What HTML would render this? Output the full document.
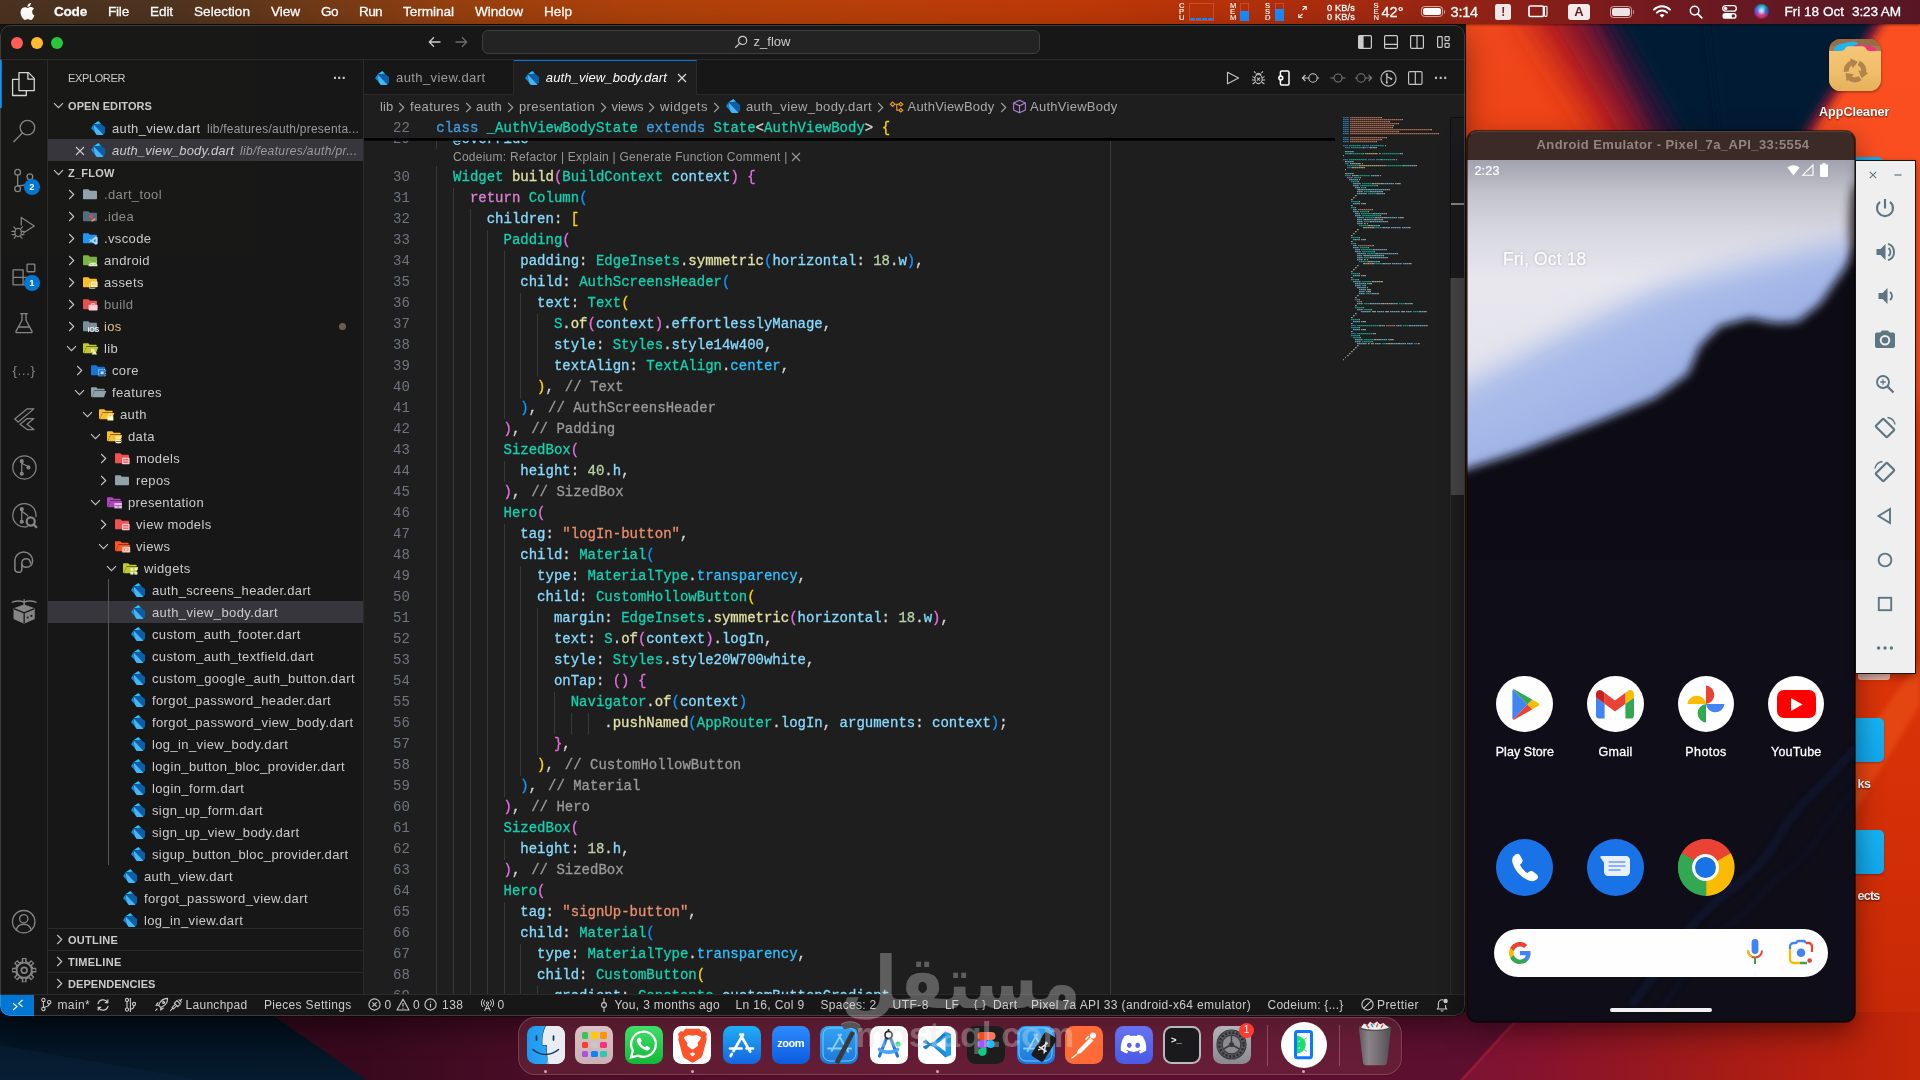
<!DOCTYPE html><html><head><meta charset="utf-8"><title>z_flow</title><style>*{box-sizing:border-box;margin:0;padding:0}
html,body{width:1920px;height:1080px;overflow:hidden;background:#c8300c;font-family:"Liberation Sans",sans-serif;-webkit-font-smoothing:antialiased}
.abs{position:absolute}
svg{display:block;overflow:visible}
.t{position:absolute;white-space:pre;display:block}
#root{position:absolute;left:0;top:0;width:1920px;height:1080px;overflow:hidden;will-change:transform;opacity:.9999}
</style></head><body><div id="root">

<div id="wall" class="abs" style="left:0;top:0;width:1920px;height:1080px;background:linear-gradient(180deg,#f04a1e 0%,#ee4518 12%,#e43c0e 38%,#dc3609 60%,#d02e08 82%,#c42808 100%)">
<svg width="1920" height="1080" viewBox="0 0 1920 1080">
<defs>
<filter id="b20" filterUnits="userSpaceOnUse" x="0" y="0" width="1920" height="1080"><feGaussianBlur stdDeviation="16"/></filter>
<filter id="b8" filterUnits="userSpaceOnUse" x="0" y="0" width="1920" height="1080"><feGaussianBlur stdDeviation="8"/></filter>
<filter id="b3" filterUnits="userSpaceOnUse" x="0" y="0" width="1920" height="1080"><feGaussianBlur stdDeviation="2.5"/></filter><filter id="b5" filterUnits="userSpaceOnUse" x="0" y="0" width="1920" height="1080"><feGaussianBlur stdDeviation="4.5"/></filter>
<linearGradient id="botg" gradientUnits="userSpaceOnUse" x1="0" x2="1920" y1="0" y2="0">
<stop offset="0" stop-color="#2e0818"/><stop offset="0.19" stop-color="#380a1e"/><stop offset="0.28" stop-color="#4a0e28"/><stop offset="0.47" stop-color="#5a1030"/><stop offset="0.68" stop-color="#5e1032"/><stop offset="0.77" stop-color="#5c1030"/><stop offset="1" stop-color="#601030"/>
</linearGradient>
<linearGradient id="botg2" gradientUnits="userSpaceOnUse" x1="1470" x2="1920" y1="0" y2="0">
<stop offset="0" stop-color="#7c1434"/><stop offset="0.16" stop-color="#86142e"/><stop offset="0.36" stop-color="#941822"/><stop offset="0.55" stop-color="#a41c18"/><stop offset="0.75" stop-color="#b42010"/><stop offset="1" stop-color="#c42808"/>
</linearGradient>
<linearGradient id="navg" x1="0" x2="0" y1="0" y2="1">
<stop offset="0" stop-color="#02101c"/><stop offset="1" stop-color="#061c30"/>
</linearGradient>
</defs>
<rect x="0" y="0" width="1466" height="1020" fill="#1a1a1a"/>
<!-- top-right rays -->
<polygon points="1780,-40 1960,-40 1960,420 1700,300" fill="#ff5226" opacity=".75" filter="url(#b20)"/>
<polygon points="1488,-40 1630,-40 1745,235 1665,235" fill="#c0201a" filter="url(#b20)"/>
<polygon points="1530,-40 1660,-40 1745,235 1690,235" fill="#6a1434" filter="url(#b20)"/><polygon points="1566,-40 1680,-40 1745,235 1706,235" fill="#2a1438" filter="url(#b8)"/>
<polygon points="1750,-40 1924,-40 1746,236 1730,160" fill="#7a1a38" filter="url(#b5)"/>
<polygon points="1580,-40 1905,-40 1734,226" fill="#011b36" filter="url(#b8)"/>
<polygon points="1700,-40 1912,-40 1738,232 1722,160" fill="#001a35" filter="url(#b5)"/>
<!-- right strip diagonal lighter band -->
<polygon points="1840,770 1920,660 1920,705 1840,835" fill="#f05a1c" opacity="0.5" filter="url(#b3)"/>
<!-- bottom strip -->
<rect x="0" y="1012" width="1920" height="68" fill="url(#botg)"/>
<polygon points="1522,1012 1920,1012 1920,1080 1460,1080" fill="url(#botg2)"/>
<polygon points="1522,1012 1526,1012 1464,1080 1460,1080" fill="#b02038" opacity=".5"/>
<polygon points="0,1012 268,1012 366,1080 0,1080" fill="url(#navg)"/>
<polygon points="0,1045 200,1080 0,1080" fill="#0a2238" opacity="0.6"/>
</svg>
</div>

<div id="menubar" class="abs" style="-webkit-text-stroke:.3px #fff;left:0;top:0;width:1920px;height:24px;background:linear-gradient(90deg,#4a3322 0%,#4e3420 9%,#6e3a18 16%,#96400f 24%,#ad420c 33%,#b8400a 45%,#bd3a09 56%,#b4320b 64%,#a02a12 72%,#8a2018 79%,#701a20 87%,#5c1926 95%,#561826 100%);box-shadow:0 1px 2px rgba(0,0,0,.45)">
<svg class="abs" style="left:19.5px;top:2.5px" width="15" height="17" viewBox="2 0 20 24"><path fill="#fff" d="M12.152 6.896c-.948 0-2.415-1.078-3.96-1.04-2.04.027-3.91 1.183-4.961 3.014-2.117 3.675-.546 9.103 1.519 12.09 1.013 1.454 2.208 3.09 3.792 3.039 1.52-.065 2.09-.987 3.935-.987 1.831 0 2.35.987 3.96.948 1.637-.026 2.676-1.48 3.676-2.948 1.156-1.688 1.636-3.325 1.662-3.415-.039-.013-3.182-1.221-3.22-4.857-.026-3.04 2.48-4.494 2.597-4.559-1.429-2.09-3.623-2.324-4.39-2.376-2-.156-3.675 1.09-4.61 1.09zM15.53 3.83c.843-1.012 1.4-2.427 1.245-3.83-1.207.052-2.662.805-3.532 1.818-.78.896-1.454 2.338-1.273 3.714 1.338.104 2.715-.688 3.559-1.701"/></svg>
<span class="t" style="left:54.0px;top:2.0px;height:19px;line-height:19px;font-size:13.60px;color:#fff;letter-spacing:-0.250px;font-weight:700;">Code</span>
<span class="t" style="left:108.0px;top:2.0px;height:19px;line-height:19px;font-size:13.60px;color:#fff;letter-spacing:-0.229px;">File</span>
<span class="t" style="left:150.0px;top:2.0px;height:19px;line-height:19px;font-size:13.60px;color:#fff;letter-spacing:-0.109px;">Edit</span>
<span class="t" style="left:194.0px;top:2.0px;height:19px;line-height:19px;font-size:13.60px;color:#fff;letter-spacing:0.006px;">Selection</span>
<span class="t" style="left:271.0px;top:2.0px;height:19px;line-height:19px;font-size:13.60px;color:#fff;letter-spacing:-0.058px;">View</span>
<span class="t" style="left:321.0px;top:2.0px;height:19px;line-height:19px;font-size:13.60px;color:#fff;letter-spacing:-0.571px;">Go</span>
<span class="t" style="left:359.0px;top:2.0px;height:19px;line-height:19px;font-size:13.60px;color:#fff;letter-spacing:-0.650px;">Run</span>
<span class="t" style="left:403.0px;top:2.0px;height:19px;line-height:19px;font-size:13.60px;color:#fff;letter-spacing:-0.049px;">Terminal</span>
<span class="t" style="left:475.0px;top:2.0px;height:19px;line-height:19px;font-size:13.60px;color:#fff;letter-spacing:-0.062px;">Window</span>
<span class="t" style="left:544.0px;top:2.0px;height:19px;line-height:19px;font-size:13.60px;color:#fff;letter-spacing:0.007px;">Help</span>
<span class="t" style="left:1179.0px;top:2.7px;height:6px;line-height:6px;font-size:7.60px;color:#fff;-webkit-text-stroke:.15px #fff;">C</span><span class="t" style="left:1179.0px;top:8.9px;height:6px;line-height:6px;font-size:7.60px;color:#fff;-webkit-text-stroke:.15px #fff;">P</span><span class="t" style="left:1179.0px;top:15.1px;height:6px;line-height:6px;font-size:7.60px;color:#fff;-webkit-text-stroke:.15px #fff;">U</span>
<div class="abs" style="left:1189px;top:3px;width:25px;height:18px;border:1px solid rgba(230,110,100,.45)"></div>
<div class="abs" style="left:1190px;top:18px;width:5px;height:2px;background:#1a8cff"></div>
<div class="abs" style="left:1196px;top:18px;width:5px;height:2px;background:#1a8cff"></div>
<div class="abs" style="left:1202px;top:18px;width:5px;height:2px;background:#1a8cff"></div>
<div class="abs" style="left:1208px;top:18px;width:5px;height:2px;background:#1a8cff"></div>
<span class="t" style="left:1230.0px;top:2.7px;height:6px;line-height:6px;font-size:7.60px;color:#fff;-webkit-text-stroke:.15px #fff;">M</span><span class="t" style="left:1230.0px;top:8.9px;height:6px;line-height:6px;font-size:7.60px;color:#fff;-webkit-text-stroke:.15px #fff;">E</span><span class="t" style="left:1230.0px;top:15.1px;height:6px;line-height:6px;font-size:7.60px;color:#fff;-webkit-text-stroke:.15px #fff;">M</span>
<div class="abs" style="left:1240px;top:3px;width:9px;height:18px;border:1px solid rgba(230,110,100,.45)"></div><div class="abs" style="left:1240px;top:11px;width:9px;height:10px;background:#1a8cff"></div>
<span class="t" style="left:1265.0px;top:2.7px;height:6px;line-height:6px;font-size:7.60px;color:#fff;-webkit-text-stroke:.15px #fff;">S</span><span class="t" style="left:1265.0px;top:8.9px;height:6px;line-height:6px;font-size:7.60px;color:#fff;-webkit-text-stroke:.15px #fff;">S</span><span class="t" style="left:1265.0px;top:15.1px;height:6px;line-height:6px;font-size:7.60px;color:#fff;-webkit-text-stroke:.15px #fff;">D</span>
<div class="abs" style="left:1275px;top:3px;width:9px;height:18px;border:1px solid rgba(230,110,100,.45)"></div><div class="abs" style="left:1275px;top:9px;width:9px;height:12px;background:#1a8cff"></div>
<svg class="abs" style="left:1297px;top:5px" width="11" height="14" viewBox="0 0 11 14"><path d="M5.5 5.2 9 1.7M5.6 1.5H9.2V5.1M5.5 8.8 2 12.3M1.8 8.9v3.6h3.6" stroke="#fff" stroke-width="1.1" fill="none"/></svg>
<span class="t" style="left:1327.0px;top:2.6px;height:10px;line-height:10px;font-size:9.20px;color:#fff;letter-spacing:0.150px;">0 KB/s</span>
<span class="t" style="left:1327.0px;top:11.6px;height:10px;line-height:10px;font-size:9.20px;color:#fff;letter-spacing:0.150px;">0 KB/s</span>
<span class="t" style="left:1373.5px;top:2.7px;height:6px;line-height:6px;font-size:7.60px;color:#fff;-webkit-text-stroke:.15px #fff;">S</span><span class="t" style="left:1373.5px;top:8.9px;height:6px;line-height:6px;font-size:7.60px;color:#fff;-webkit-text-stroke:.15px #fff;">E</span><span class="t" style="left:1373.5px;top:15.1px;height:6px;line-height:6px;font-size:7.60px;color:#fff;-webkit-text-stroke:.15px #fff;">N</span>
<span class="t" style="left:1381.5px;top:2.0px;height:20px;line-height:20px;font-size:14.50px;color:#fff;letter-spacing:0.024px;">42°</span>
<div class="abs" style="left:1420.5px;top:5.8px;width:22.5px;height:11.6px;border:1px solid rgba(255,255,255,.6);border-radius:3.5px"></div><div class="abs" style="left:1422.5px;top:7.8px;width:18.5px;height:7.6px;background:#fff;border-radius:2px"></div><div class="abs" style="left:1443.8px;top:9.6px;width:1.6px;height:4px;background:rgba(255,255,255,.55);border-radius:0 1.5px 1.5px 0"></div>
<span class="t" style="left:1450.5px;top:2.0px;height:20px;line-height:20px;font-size:14.50px;color:#fff;letter-spacing:-0.180px;">3:14</span>
<div class="abs" style="left:1495px;top:4px;width:16px;height:16px;background:#f2e9e9;border-radius:2.5px"></div>
<span class="t" style="left:1501.2px;top:3.5px;height:17px;line-height:17px;font-size:12.00px;color:#7a2020;font-weight:700;-webkit-text-stroke:0;">!</span>
<svg class="abs" style="left:1528px;top:5px" width="20" height="13" viewBox="0 0 20 13"><rect x="1" y="1" width="14.5" height="10.5" rx="1.3" fill="none" stroke="#fff" stroke-width="1.7"/><rect x="16.4" y="1.2" width="2.6" height="10.2" rx=".8" fill="none" stroke="#fff" stroke-width="1.1"/></svg>
<div class="abs" style="left:1568px;top:3.5px;width:22px;height:16.5px;background:#f4eded;border-radius:3px"></div>
<span class="t" style="left:1574.3px;top:3.3px;height:18px;line-height:18px;font-size:13.00px;color:#6a1f24;font-weight:700;-webkit-text-stroke:0;">A</span>
<div class="abs" style="left:1609.5px;top:6.0px;width:22.5px;height:11.6px;border:1px solid rgba(255,255,255,.6);border-radius:3.5px"></div><div class="abs" style="left:1611.5px;top:8.0px;width:18.5px;height:7.6px;background:rgba(255,255,255,.88);border-radius:2px"></div><div class="abs" style="left:1632.8px;top:9.8px;width:1.6px;height:4px;background:rgba(255,255,255,.55);border-radius:0 1.5px 1.5px 0"></div>
<svg class="abs" style="left:1652.5px;top:4.5px" width="18" height="13" viewBox="0 0 18 13"><path d="M1 4.6a11.3 11.3 0 0 1 16 0" stroke="#fff" stroke-width="2" fill="none" stroke-linecap="round"/><path d="M3.9 7.6a7.2 7.2 0 0 1 10.2 0" stroke="#fff" stroke-width="2" fill="none" stroke-linecap="round"/><path d="M6.6 10.3a3.4 3.4 0 0 1 4.8 0L9 12.8z" fill="#fff"/></svg>
<svg class="abs" style="left:1689px;top:4.5px" width="14" height="14" viewBox="0 0 14 14"><circle cx="5.6" cy="5.6" r="4.3" stroke="#fff" stroke-width="1.5" fill="none"/><path d="M8.8 8.8 12.8 12.8" stroke="#fff" stroke-width="1.7" stroke-linecap="round"/></svg>
<svg class="abs" style="left:1721.5px;top:5px" width="15" height="14" viewBox="0 0 15 14"><rect x=".7" y=".7" width="13.6" height="5.4" rx="2.7" fill="none" stroke="#fff" stroke-width="1.3"/><circle cx="3.6" cy="3.4" r="1.7" fill="#fff"/><rect x=".4" y="8" width="14.2" height="5.8" rx="2.9" fill="#fff"/><circle cx="11.3" cy="10.9" r="1.7" fill="#6a1a22"/></svg>
<div class="abs" style="left:1753.5px;top:4px;width:15px;height:15px;border-radius:50%;background:conic-gradient(from 200deg,#e8336a,#9b4ae0,#3aa0f0,#35d3d0,#2a6ae0,#d03a8a,#e8336a);box-shadow:inset 0 0 2px 1px rgba(30,20,60,.6)"></div><div class="abs" style="left:1757.5px;top:7px;width:7px;height:8px;border-radius:50%;background:radial-gradient(circle,#d8f4ff 0%,rgba(120,190,255,.2) 80%)"></div>
<span class="t" style="left:1784.5px;top:2.0px;height:19px;line-height:19px;font-size:13.60px;color:#fff;letter-spacing:-0.020px;">Fri 18 Oct</span>
<span class="t" style="left:1852.0px;top:2.0px;height:19px;line-height:19px;font-size:13.60px;color:#fff;letter-spacing:-0.128px;">3:23 AM</span>
</div>
<div id="vsc" class="abs" style="left:0;top:25px;width:1465px;height:991px;border-radius:10px;overflow:hidden;background:#181818;box-shadow:0 0 0 .5px rgba(0,0,0,.6),0 12px 30px rgba(0,0,0,.45)"><div class="abs" style="left:0;top:-25px;width:1920px;height:1080px">
<div class="abs" style="left:0;top:25px;width:1465px;height:35px;background:#181818;border-bottom:1px solid #2b2b2b"></div>
<div class="abs" style="left:11px;top:37px;width:12px;height:12px;border-radius:6px;background:#ff5f57"></div>
<div class="abs" style="left:31px;top:37px;width:12px;height:12px;border-radius:6px;background:#febc2e"></div>
<div class="abs" style="left:51px;top:37px;width:12px;height:12px;border-radius:6px;background:#28c840"></div>
<svg class="abs" style="left:427.0px;top:35.0px;" width="16" height="14" viewBox="0 0 16 14"><path d="M13.5 7H2.5M7 2.3 2.3 7 7 11.7" stroke="#ccc" stroke-width="1.3" fill="none"/></svg>
<svg class="abs" style="left:453.0px;top:35.0px;" width="16" height="14" viewBox="0 0 16 14"><path d="M2.5 7H13.5M9 2.3 13.7 7 9 11.7" stroke="#6e6e6e" stroke-width="1.3" fill="none"/></svg>
<div class="abs" style="left:482px;top:30px;width:558px;height:24px;border-radius:6px;background:#242424;border:1px solid #3f3f3f"></div>
<svg class="abs" style="left:734.0px;top:35.0px;" width="14" height="14" viewBox="0 0 14 14"><circle cx="8.6" cy="5.4" r="4.1" stroke="#ccc" stroke-width="1.2" fill="none"/><path d="M5.6 8.4 1.2 12.8" stroke="#ccc" stroke-width="1.3"/></svg>
<span class="t" style="left:753.5px;top:32.5px;height:18px;line-height:18px;font-size:13.00px;color:#ccc;letter-spacing:0.025px;">z_flow</span>
<svg class="abs" style="left:1358.0px;top:35.0px;" width="14" height="14" viewBox="0 0 14 14"><rect x=".6" y=".6" width="12.8" height="12.8" rx="1.2" fill="none" stroke="#ccc" stroke-width="1.2"/><rect x=".6" y=".6" width="5" height="12.8" fill="#ccc"/></svg>
<svg class="abs" style="left:1384.0px;top:35.0px;" width="14" height="14" viewBox="0 0 14 14"><rect x=".6" y=".6" width="12.8" height="12.8" rx="1.2" fill="none" stroke="#ccc" stroke-width="1.2"/><path d="M.6 9.3h12.8" stroke="#ccc" stroke-width="1.2"/></svg>
<svg class="abs" style="left:1410.0px;top:35.0px;" width="14" height="14" viewBox="0 0 14 14"><rect x=".6" y=".6" width="12.8" height="12.8" rx="1.2" fill="none" stroke="#ccc" stroke-width="1.2"/><path d="M7 .6v12.8" stroke="#ccc" stroke-width="1.2"/></svg>
<svg class="abs" style="left:1437.0px;top:36.0px;" width="13" height="12" viewBox="0 0 13 12"><rect x=".6" y=".6" width="4.6" height="10.8" rx=".8" fill="none" stroke="#ccc" stroke-width="1.2"/><rect x="8" y=".6" width="4.2" height="4" rx=".8" fill="none" stroke="#ccc" stroke-width="1.2"/><rect x="8" y="7.4" width="4.2" height="4" rx=".8" fill="none" stroke="#ccc" stroke-width="1.2"/></svg>
<div class="abs" style="left:0;top:60px;width:48px;height:935px;background:#181818;border-right:1px solid #2b2b2b"></div>
<div class="abs" style="left:0;top:60px;width:2px;height:48px;background:#0078d4"></div>
<svg class="abs" style="left:6.5px;top:67.5px;" width="31.92" height="31.92" viewBox="0 0 24 24"><g fill="none" stroke="#d7d7d7" stroke-width="0.977444" stroke-linejoin="round" stroke-linecap="round"><path d="M9 3.5h7.2l4.3 4.3V17H9z"/><path d="M15.7 3.7v4.6h4.6"/><path d="M9 8.5H4.2v12.2h10.3V17"/></g></svg>
<svg class="abs" style="left:9.8px;top:116.8px;" width="28.32" height="28.32" viewBox="0 0 24 24"><g fill="none" stroke="#868686" stroke-width="1.10169" stroke-linejoin="round" stroke-linecap="round"><circle cx="14.8" cy="9" r="6.2"/><path d="M10.4 13.6 3.2 21"/></g></svg>
<svg class="abs" style="left:8.6px;top:165.6px;" width="28.8" height="28.8" viewBox="0 0 24 24"><g fill="none" stroke="#868686" stroke-width="1.08333" stroke-linejoin="round" stroke-linecap="round"><circle cx="7.2" cy="5.2" r="2.4"/><circle cx="7.2" cy="19" r="2.4"/><circle cx="17.4" cy="9" r="2.4"/><path d="M7.2 7.6v9M17.4 11.4c0 3.6-4 4.8-10 5.2"/></g></svg>
<div class="abs" style="left:24px;top:179px;width:16px;height:16px;border-radius:8px;background:#0078d4"></div><span class="t" style="left:29.2px;top:181.3px;height:12px;line-height:12px;font-size:9.50px;color:#fff;font-weight:700;">2</span>
<svg class="abs" style="left:11.0px;top:214.0px;" width="25.92" height="25.92" viewBox="0 0 24 24"><g fill="none" stroke="#868686" stroke-width="1.15741" stroke-linejoin="round" stroke-linecap="round"><path d="M9.5 3.2 21.5 11.2 11.4 17.6M9.5 3.2v7"/><ellipse cx="6.6" cy="17.2" rx="3" ry="3.8"/><path d="M3.6 16.2H.8M3.6 19H1M9.6 16.2h2.6M9.6 19h2.4M4.2 13.8 2.6 12M9 13.8l1.6-1.8M4.4 20.8 3 22.4M8.8 20.8l1.4 1.6"/></g></svg>
<svg class="abs" style="left:10.0px;top:261.0px;" width="28.08" height="28.08" viewBox="0 0 24 24"><g fill="none" stroke="#868686" stroke-width="1.11111" stroke-linejoin="round" stroke-linecap="round"><path d="M2.6 7.6h8.6v12.8H2.6zM2.6 14h17.2v6.4H11.2M11.2 14h8.6"/><rect x="14.6" y="2.6" width="6.6" height="6.6" rx=".6"/></g></svg>
<div class="abs" style="left:24px;top:275px;width:16px;height:16px;border-radius:8px;background:#0078d4"></div><span class="t" style="left:29.2px;top:277.3px;height:12px;line-height:12px;font-size:9.50px;color:#fff;font-weight:700;">1</span>
<svg class="abs" style="left:12.0px;top:311.0px;" width="24" height="24" viewBox="0 0 24 24"><g fill="none" stroke="#868686" stroke-width="1.3" stroke-linejoin="round" stroke-linecap="round"><path d="M8.6 2.6h6.8M10 2.8v6.4L4 20.4c-.3.7.1 1.2.8 1.2h14.4c.7 0 1.1-.5.8-1.2L14 9.2V2.8M6.8 16h10.4"/></g></svg>
<span class="t" style="left:12.5px;top:361.0px;height:19px;line-height:19px;font-size:13.50px;color:#868686;letter-spacing:0.546px;">{...}</span>
<svg class="abs" style="left:10.8px;top:405.8px;" width="26.4" height="26.4" viewBox="0 0 24 24"><g fill="none" stroke="#868686" stroke-width="1.13636" stroke-linejoin="round" stroke-linecap="round"><path d="M14.8 2.6h6L6.6 14.6 3.4 11.8zM14.8 11.4h6L14.6 16.6l6.2 4.8h-6L8.2 16.6z"/></g></svg>
<svg class="abs" style="left:10.6px;top:453.6px;" width="26.88" height="26.88" viewBox="0 0 24 24"><g fill="none" stroke="#868686" stroke-width="1.11607" stroke-linejoin="round" stroke-linecap="round"><circle cx="12" cy="12" r="10.4"/><circle cx="9.6" cy="6.4" r="1.3" fill="#868686"/><circle cx="9.6" cy="17.6" r="1.3" fill="#868686"/><circle cx="15.6" cy="12" r="1.3" fill="#868686"/><path d="M9.6 6.4v11.2M9.6 7.6c0 2 6 2.4 6 4.4"/></g></svg>
<svg class="abs" style="left:10.6px;top:501.6px;" width="26.88" height="26.88" viewBox="0 0 24 24"><g fill="none" stroke="#868686" stroke-width="1.11607" stroke-linejoin="round" stroke-linecap="round"><path d="M14.6 21.9A10.4 10.4 0 1 1 22.3 13"/><circle cx="9.6" cy="6.4" r="1.3" fill="#868686"/><circle cx="9.6" cy="17.6" r="1.3" fill="#868686"/><path d="M9.6 6.4v11.2M9.6 7.6c0 2 5 3 5.4 5"/><circle cx="17.6" cy="17.4" r="3.6" stroke-width="2"/><path d="M20.2 20 22.6 22.4" stroke-width="2"/></g></svg>
<svg class="abs" style="left:11.0px;top:550.0px;" width="25.92" height="25.92" viewBox="0 0 24 24"><g fill="none" stroke="#868686" stroke-width="1.38889" stroke-linejoin="round" stroke-linecap="round"><path d="M6.2 20.6c-1.6-.2-2.6-1.4-2.6-3V10a8.2 8.2 0 0 1 16.4 0c0 3.6-2.6 6-5.8 6-2.4 0-4.2-1.6-4.2-4a4 4 0 0 1 8 0M10 12v6.4c0 1.6-1.4 2.6-3.8 2.2"/></g></svg>
<svg class="abs" style="left:9.8px;top:596.8px;" width="28.32" height="28.32" viewBox="0 0 24 24"><g fill="none" stroke="#868686" stroke-width="1.01695" stroke-linejoin="round" stroke-linecap="round"><path d="M2 4.4c4-1.6 7-1.4 10 0 3-1.4 6-1.6 10 0M12 2.4v5" stroke-width="1.2"/><path d="M3 9.6 12 6.4l9 3.2v9L12 22.6 3 18.6z" fill="#868686" stroke="none"/><path d="M3.8 10 12 13.4l8.2-3.4M12 13.4v8.6" stroke="#181818" stroke-width="1.1"/><circle cx="15" cy="17.4" r=".9" fill="#181818" stroke="none"/><circle cx="18.2" cy="16" r=".9" fill="#181818" stroke="none"/></g></svg>
<svg class="abs" style="left:11.3px;top:909.3px;" width="25.44" height="25.44" viewBox="0 0 24 24"><g fill="none" stroke="#868686" stroke-width="1.22642" stroke-linejoin="round" stroke-linecap="round"><circle cx="12" cy="12" r="10.6"/><circle cx="12" cy="9.2" r="3.9"/><path d="M4.9 19.8c1-3.6 3.6-5.4 7.1-5.4s6.100 1.8 7.1 5.4"/></g></svg>
<svg class="abs" style="left:10.8px;top:956.8px;" width="26.4" height="26.4" viewBox="0 0 24 24"><g fill="none" stroke="#868686"><circle cx="12" cy="12" r="7.6" stroke-width="1.5"/><path d="M19.20 12.00 L23.00 12.00" stroke-width="4.4" stroke-linecap="butt"/><path d="M17.09 17.09 L19.78 19.78" stroke-width="4.4" stroke-linecap="butt"/><path d="M12.00 19.20 L12.00 23.00" stroke-width="4.4" stroke-linecap="butt"/><path d="M6.91 17.09 L4.22 19.78" stroke-width="4.4" stroke-linecap="butt"/><path d="M4.80 12.00 L1.00 12.00" stroke-width="4.4" stroke-linecap="butt"/><path d="M6.91 6.91 L4.22 4.22" stroke-width="4.4" stroke-linecap="butt"/><path d="M12.00 4.80 L12.00 1.00" stroke-width="4.4" stroke-linecap="butt"/><path d="M17.09 6.91 L19.78 4.22" stroke-width="4.4" stroke-linecap="butt"/></g><g fill="#181818"><circle cx="12" cy="12" r="6.9"/></g><path d="M19.40 12.00 L22.20 12.00" stroke="#181818" stroke-width="1.6"/><path d="M17.23 17.23 L19.21 19.21" stroke="#181818" stroke-width="1.6"/><path d="M12.00 19.40 L12.00 22.20" stroke="#181818" stroke-width="1.6"/><path d="M6.77 17.23 L4.79 19.21" stroke="#181818" stroke-width="1.6"/><path d="M4.60 12.00 L1.80 12.00" stroke="#181818" stroke-width="1.6"/><path d="M6.77 6.77 L4.79 4.79" stroke="#181818" stroke-width="1.6"/><path d="M12.00 4.60 L12.00 1.80" stroke="#181818" stroke-width="1.6"/><path d="M17.23 6.77 L19.21 4.79" stroke="#181818" stroke-width="1.6"/><circle cx="12" cy="12" r="6.8" fill="none" stroke="#868686" stroke-width="1.5"/><circle cx="12" cy="12" r="2.6" fill="none" stroke="#868686" stroke-width="1.5"/></svg>
<div class="abs" style="left:48px;top:60px;width:316px;height:935px;background:#181818;border-right:1px solid #2b2b2b"></div>
<span class="t" style="left:68.0px;top:70.7px;height:15px;line-height:15px;font-size:11.00px;color:#ccc;letter-spacing:-0.364px;">EXPLORER</span>
<span class="t" style="left:333.0px;top:67.7px;height:20px;line-height:20px;font-size:14.00px;color:#ccc;letter-spacing:-0.329px;font-weight:700;">···</span>
<svg class="abs" style="left:53.0px;top:102.0px;" width="11" height="7" viewBox="0 0 11 7"><path d="M1 1.200 5.500 5.700 10 1.200" stroke="#c5c5c5" stroke-width="1.150" fill="none"/></svg>
<span class="t" style="left:68.0px;top:98.7px;height:15px;line-height:15px;font-size:11.00px;color:#ccc;letter-spacing:0.090px;font-weight:700;">OPEN EDITORS</span>
<svg class="abs" style="left:91.3px;top:120.9px;" width="14.2" height="14.2" viewBox="0 0 14.2 14.2"><path d="M7.400 0 10 2.850 2.600 3.200z" fill="#22ccff"/><path d="M2.600 3.200 10 2.850 14.100 5.900V11.600L12.400 13.400z" fill="#0b5fa8"/><path d="M2.600 3.200 12.400 13.400 11.800 14H5.700L3.400 10.800z" fill="#40b8f8"/><path d="M2.600 3.200 0 7.300 3.400 10.800z" fill="#1c86d6"/></svg>
<span class="t" style="left:112.0px;top:119.7px;height:18px;line-height:18px;font-size:13.00px;color:#ccc;letter-spacing:0.333px;">auth_view.dart</span>
<span class="t" style="left:207.0px;top:120.7px;height:17px;line-height:17px;font-size:12.00px;color:#9d9d9d;letter-spacing:0.227px;">lib/features/auth/presenta...</span>
<div class="abs" style="left:48px;top:139px;width:315px;height:22px;background:#37373d"></div>
<svg class="abs" style="left:75.0px;top:145.5px;" width="10" height="10" viewBox="0 0 10 10"><path d="M1 1 9 9M9 1 1 9" stroke="#ccc" stroke-width="1.100"/></svg>
<svg class="abs" style="left:91.3px;top:142.9px;" width="14.2" height="14.2" viewBox="0 0 14.2 14.2"><path d="M7.400 0 10 2.850 2.600 3.200z" fill="#22ccff"/><path d="M2.600 3.200 10 2.850 14.100 5.900V11.600L12.400 13.400z" fill="#0b5fa8"/><path d="M2.600 3.200 12.400 13.400 11.800 14H5.700L3.400 10.800z" fill="#40b8f8"/><path d="M2.600 3.200 0 7.300 3.400 10.800z" fill="#1c86d6"/></svg>
<span class="t" style="left:112.0px;top:141.7px;height:18px;line-height:18px;font-size:13.00px;color:#ccc;letter-spacing:0.158px;font-style:italic;">auth_view_body.dart</span>
<span class="t" style="left:240.0px;top:142.7px;height:17px;line-height:17px;font-size:12.00px;color:#9d9d9d;letter-spacing:0.372px;font-style:italic;">lib/features/auth/pr...</span>
<svg class="abs" style="left:53.0px;top:169.0px;" width="11" height="7" viewBox="0 0 11 7"><path d="M1 1.200 5.500 5.700 10 1.200" stroke="#c5c5c5" stroke-width="1.150" fill="none"/></svg>
<span class="t" style="left:68.0px;top:165.7px;height:15px;line-height:15px;font-size:11.00px;color:#ccc;letter-spacing:0.214px;font-weight:700;">Z_FLOW</span>
<svg class="abs" style="left:68.0px;top:188.5px;" width="7" height="11" viewBox="0 0 7 11"><path d="M1.200 1 5.700 5.500 1.200 10" stroke="#c5c5c5" stroke-width="1.150" fill="none"/></svg><svg class="abs" style="left:83.0px;top:188.0px;" width="16" height="13" viewBox="0 0 16 13"><g transform="translate(0 .9) scale(1 .9)"><path d="M0 1.700C0 1 .500.500 1.200.500H5.400L6.900 2H12.800c.7 0 1.200.5 1.200 1.200v7.100c0 .7-.5 1.200-1.200 1.200H1.200C.5 11.500 0 11 0 10.300z" fill="#90a4ae"/></g></svg><span class="t" style="left:104.0px;top:183.7px;height:22px;line-height:22px;font-size:13.00px;color:#8c8c8c;letter-spacing:0.370px;">.dart_tool</span>
<svg class="abs" style="left:68.0px;top:210.5px;" width="7" height="11" viewBox="0 0 7 11"><path d="M1.200 1 5.700 5.500 1.200 10" stroke="#c5c5c5" stroke-width="1.150" fill="none"/></svg><svg class="abs" style="left:83.0px;top:210.0px;" width="16" height="13" viewBox="0 0 16 13"><g transform="translate(0 .9) scale(1 .9)"><path d="M0 1.700C0 1 .500.500 1.200.500H5.400L6.900 2H12.800c.7 0 1.200.5 1.200 1.200v7.100c0 .7-.5 1.200-1.200 1.200H1.200C.5 11.500 0 11 0 10.300z" fill="#546e7a"/><path d="M9.500 4.200 7 6.300l5.200 2.600" stroke="#ec407a" stroke-width="1.300" fill="none"/><path d="M12.200 8.900 8.600 11.600" stroke="#ffa726" stroke-width="1.300"/></g></svg><span class="t" style="left:104.0px;top:205.7px;height:22px;line-height:22px;font-size:13.00px;color:#8c8c8c;letter-spacing:0.370px;">.idea</span>
<svg class="abs" style="left:68.0px;top:232.5px;" width="7" height="11" viewBox="0 0 7 11"><path d="M1.200 1 5.700 5.500 1.200 10" stroke="#c5c5c5" stroke-width="1.150" fill="none"/></svg><svg class="abs" style="left:83.0px;top:232.0px;" width="16" height="13" viewBox="0 0 16 13"><g transform="translate(0 .9) scale(1 .9)"><path d="M0 1.700C0 1 .500.500 1.200.500H5.400L6.900 2H12.800c.7 0 1.200.5 1.200 1.200v7.100c0 .7-.5 1.200-1.200 1.200H1.200C.5 11.500 0 11 0 10.300z" fill="#2196f3"/><path d="M14.600 4.800 12.600 4 8.200 8 6.800 6.900 6.200 7.300 7.600 8.600 6.200 9.900 6.800 10.300 8.200 9.200 12.600 13.200 14.600 12.400z" fill="#bbdefb"/><path d="M12.600 6.400 10 8.600 12.600 10.800z" fill="#2196f3"/></g></svg><span class="t" style="left:104.0px;top:227.7px;height:22px;line-height:22px;font-size:13.00px;color:#ccc;letter-spacing:0.370px;">.vscode</span>
<svg class="abs" style="left:68.0px;top:254.5px;" width="7" height="11" viewBox="0 0 7 11"><path d="M1.200 1 5.700 5.500 1.200 10" stroke="#c5c5c5" stroke-width="1.150" fill="none"/></svg><svg class="abs" style="left:83.0px;top:254.0px;" width="16" height="13" viewBox="0 0 16 13"><g transform="translate(0 .9) scale(1 .9)"><path d="M0 1.700C0 1 .500.500 1.200.500H5.400L6.900 2H12.800c.7 0 1.200.5 1.200 1.200v7.100c0 .7-.5 1.200-1.200 1.200H1.200C.5 11.500 0 11 0 10.300z" fill="#7cb342"/><path d="M5.500 12.500a4.500 4 0 0 1 9 0z" fill="#dcedc8"/><path d="M7.200 8.700 6.200 7.200M12.800 8.700l1-1.500" stroke="#dcedc8" stroke-width=".8"/><circle cx="8.300" cy="10.600" r=".6" fill="#7cb342"/><circle cx="11.700" cy="10.600" r=".6" fill="#7cb342"/></g></svg><span class="t" style="left:104.0px;top:249.7px;height:22px;line-height:22px;font-size:13.00px;color:#ccc;letter-spacing:0.370px;">android</span>
<svg class="abs" style="left:68.0px;top:276.5px;" width="7" height="11" viewBox="0 0 7 11"><path d="M1.200 1 5.700 5.500 1.200 10" stroke="#c5c5c5" stroke-width="1.150" fill="none"/></svg><svg class="abs" style="left:83.0px;top:276.0px;" width="16" height="13" viewBox="0 0 16 13"><g transform="translate(0 .9) scale(1 .9)"><path d="M0 1.700C0 1 .500.500 1.200.500H5.400L6.900 2H12.800c.7 0 1.200.5 1.200 1.200v7.100c0 .7-.5 1.200-1.200 1.200H1.200C.5 11.500 0 11 0 10.300z" fill="#fbc02d"/><rect x="8" y="5.300" width="6.600" height="6" fill="#fff9c4"/><path d="M9.200 7h4.200M9.200 8.400h4.200M9.200 9.800h4.200" stroke="#fbc02d" stroke-width=".7"/><path d="M6.600 7.300v5.400h5.600" stroke="#fff9c4" stroke-width=".8" fill="none"/></g></svg><span class="t" style="left:104.0px;top:271.7px;height:22px;line-height:22px;font-size:13.00px;color:#ccc;letter-spacing:0.370px;">assets</span>
<svg class="abs" style="left:68.0px;top:298.5px;" width="7" height="11" viewBox="0 0 7 11"><path d="M1.200 1 5.700 5.500 1.200 10" stroke="#c5c5c5" stroke-width="1.150" fill="none"/></svg><svg class="abs" style="left:83.0px;top:298.0px;" width="16" height="13" viewBox="0 0 16 13"><g transform="translate(0 .9) scale(1 .9)"><path d="M0 1.700C0 1 .500.500 1.200.500H5.400L6.900 2H12.800c.7 0 1.200.5 1.200 1.200v7.100c0 .7-.5 1.200-1.200 1.200H1.200C.5 11.500 0 11 0 10.300z" fill="#e5534f"/><rect x="5.600" y="6.400" width="9" height="6.400" rx="1" fill="#ffcdd2"/><path d="M8.600 6.400V5.200h3v1.200" stroke="#ffcdd2" stroke-width="1" fill="none"/></g></svg><span class="t" style="left:104.0px;top:293.7px;height:22px;line-height:22px;font-size:13.00px;color:#8c8c8c;letter-spacing:0.370px;">build</span>
<svg class="abs" style="left:68.0px;top:320.5px;" width="7" height="11" viewBox="0 0 7 11"><path d="M1.200 1 5.700 5.500 1.200 10" stroke="#c5c5c5" stroke-width="1.150" fill="none"/></svg><svg class="abs" style="left:83.0px;top:320.0px;" width="16" height="13" viewBox="0 0 16 13"><g transform="translate(0 .9) scale(1 .9)"><path d="M0 1.700C0 1 .500.500 1.200.500H5.400L6.900 2H12.800c.7 0 1.200.5 1.200 1.200v7.100c0 .7-.5 1.200-1.200 1.200H1.200C.5 11.500 0 11 0 10.300z" fill="#78909c"/><text x="4.600" y="12.700" font-family="Liberation Sans,sans-serif" font-size="7.200" font-weight="700" fill="#eceff1" letter-spacing="-.3">iOS</text></g></svg><span class="t" style="left:104.0px;top:315.7px;height:22px;line-height:22px;font-size:13.00px;color:#e2c08d;letter-spacing:0.370px;">ios</span>
<svg class="abs" style="left:65.5px;top:344.5px;" width="11" height="7" viewBox="0 0 11 7"><path d="M1 1.200 5.500 5.700 10 1.200" stroke="#c5c5c5" stroke-width="1.150" fill="none"/></svg><svg class="abs" style="left:83.0px;top:342.0px;" width="16" height="13" viewBox="0 0 16 13"><g transform="translate(0 .9) scale(1 .9)"><path d="M0 1.600C0 .9.500.500 1.100.500H5.300L6.800 2H12.600c.6 0 1.100.4 1.100 1.100V4H3.400L.9 11.300C.3 11.300 0 10.800 0 10.300z" fill="#c0ca33"/><path d="M3.300 4.600H15.300L12.900 11.500H.9z" fill="#c0ca33"/><path d="M8.600 13 11.400 8.600 14.200 13z" fill="#f0f4c3"/><rect x="8" y="6.600" width="3.400" height="3.400" fill="#f0f4c3" opacity=".8"/></g></svg><span class="t" style="left:104.0px;top:337.7px;height:22px;line-height:22px;font-size:13.00px;color:#ccc;letter-spacing:0.370px;">lib</span>
<svg class="abs" style="left:76.0px;top:364.5px;" width="7" height="11" viewBox="0 0 7 11"><path d="M1.200 1 5.700 5.500 1.200 10" stroke="#c5c5c5" stroke-width="1.150" fill="none"/></svg><svg class="abs" style="left:91.0px;top:364.0px;" width="16" height="13" viewBox="0 0 16 13"><g transform="translate(0 .9) scale(1 .9)"><path d="M0 1.700C0 1 .500.500 1.200.500H5.400L6.900 2H12.800c.7 0 1.200.5 1.200 1.200v7.100c0 .7-.5 1.200-1.200 1.200H1.200C.5 11.500 0 11 0 10.300z" fill="#1976d2"/><rect x="7.600" y="5.200" width="7" height="7" fill="none" stroke="#bbdefb" stroke-width=".9" stroke-dasharray="1.100 .7"/><rect x="9.600" y="7.200" width="3" height="3" fill="#bbdefb"/></g></svg><span class="t" style="left:112.0px;top:359.7px;height:22px;line-height:22px;font-size:13.00px;color:#ccc;letter-spacing:0.370px;">core</span>
<svg class="abs" style="left:73.5px;top:388.5px;" width="11" height="7" viewBox="0 0 11 7"><path d="M1 1.200 5.500 5.700 10 1.200" stroke="#c5c5c5" stroke-width="1.150" fill="none"/></svg><svg class="abs" style="left:91.0px;top:386.0px;" width="16" height="13" viewBox="0 0 16 13"><g transform="translate(0 .9) scale(1 .9)"><path d="M0 1.600C0 .9.500.500 1.100.500H5.300L6.800 2H12.600c.6 0 1.100.4 1.100 1.100V4H3.400L.9 11.300C.3 11.300 0 10.800 0 10.300z" fill="#90a4ae"/><path d="M3.300 4.600H15.300L12.900 11.500H.9z" fill="#90a4ae"/></g></svg><span class="t" style="left:112.0px;top:381.7px;height:22px;line-height:22px;font-size:13.00px;color:#ccc;letter-spacing:0.370px;">features</span>
<svg class="abs" style="left:81.5px;top:410.5px;" width="11" height="7" viewBox="0 0 11 7"><path d="M1 1.200 5.500 5.700 10 1.200" stroke="#c5c5c5" stroke-width="1.150" fill="none"/></svg><svg class="abs" style="left:99.0px;top:408.0px;" width="16" height="13" viewBox="0 0 16 13"><g transform="translate(0 .9) scale(1 .9)"><path d="M0 1.600C0 .9.500.500 1.100.500H5.300L6.800 2H12.600c.6 0 1.100.4 1.100 1.100V4H3.400L.9 11.300C.3 11.300 0 10.800 0 10.300z" fill="#fbc02d"/><path d="M3.300 4.600H15.300L12.900 11.500H.9z" fill="#fbc02d"/><rect x="8.400" y="8.200" width="6" height="4.800" rx=".6" fill="#fff9c4"/><path d="M9.800 8.200V7a1.600 1.600 0 0 1 3.200 0v1.200" stroke="#fff9c4" stroke-width=".9" fill="none"/></g></svg><span class="t" style="left:120.0px;top:403.7px;height:22px;line-height:22px;font-size:13.00px;color:#ccc;letter-spacing:0.370px;">auth</span>
<svg class="abs" style="left:89.5px;top:432.5px;" width="11" height="7" viewBox="0 0 11 7"><path d="M1 1.200 5.500 5.700 10 1.200" stroke="#c5c5c5" stroke-width="1.150" fill="none"/></svg><svg class="abs" style="left:107.0px;top:430.0px;" width="16" height="13" viewBox="0 0 16 13"><g transform="translate(0 .9) scale(1 .9)"><path d="M0 1.600C0 .9.500.500 1.100.500H5.300L6.800 2H12.600c.6 0 1.100.4 1.100 1.100V4H3.400L.9 11.300C.3 11.300 0 10.800 0 10.300z" fill="#fbc02d"/><path d="M3.300 4.600H15.300L12.900 11.500H.9z" fill="#fbc02d"/><ellipse cx="11.400" cy="7.400" rx="3.200" ry="1.400" fill="#fff9c4"/><path d="M8.200 8.600c0 1.800 6.400 1.800 6.400 0v1.600c0 1.800-6.400 1.800-6.400 0zM8.200 11c0 1.800 6.400 1.800 6.400 0v1.400c0 1.800-6.400 1.800-6.400 0z" fill="#fff9c4"/></g></svg><span class="t" style="left:128.0px;top:425.7px;height:22px;line-height:22px;font-size:13.00px;color:#ccc;letter-spacing:0.370px;">data</span>
<svg class="abs" style="left:100.0px;top:452.5px;" width="7" height="11" viewBox="0 0 7 11"><path d="M1.200 1 5.700 5.500 1.200 10" stroke="#c5c5c5" stroke-width="1.150" fill="none"/></svg><svg class="abs" style="left:115.0px;top:452.0px;" width="16" height="13" viewBox="0 0 16 13"><g transform="translate(0 .9) scale(1 .9)"><path d="M0 1.700C0 1 .500.500 1.200.500H5.400L6.900 2H12.800c.7 0 1.200.5 1.200 1.200v7.100c0 .7-.5 1.200-1.200 1.200H1.200C.5 11.500 0 11 0 10.300z" fill="#ef5350"/><rect x="7" y="5.400" width="7.600" height="7.200" rx=".8" fill="#ffcdd2"/><path d="M8.200 7.400h5.200M8.200 9h5.200M8.200 10.600h5.200" stroke="#ef5350" stroke-width=".9"/></g></svg><span class="t" style="left:136.0px;top:447.7px;height:22px;line-height:22px;font-size:13.00px;color:#ccc;letter-spacing:0.370px;">models</span>
<svg class="abs" style="left:100.0px;top:474.5px;" width="7" height="11" viewBox="0 0 7 11"><path d="M1.200 1 5.700 5.500 1.200 10" stroke="#c5c5c5" stroke-width="1.150" fill="none"/></svg><svg class="abs" style="left:115.0px;top:474.0px;" width="16" height="13" viewBox="0 0 16 13"><g transform="translate(0 .9) scale(1 .9)"><path d="M0 1.700C0 1 .500.500 1.200.500H5.400L6.900 2H12.800c.7 0 1.200.5 1.200 1.200v7.100c0 .7-.5 1.200-1.200 1.200H1.200C.5 11.500 0 11 0 10.300z" fill="#90a4ae"/></g></svg><span class="t" style="left:136.0px;top:469.7px;height:22px;line-height:22px;font-size:13.00px;color:#ccc;letter-spacing:0.370px;">repos</span>
<svg class="abs" style="left:89.5px;top:498.5px;" width="11" height="7" viewBox="0 0 11 7"><path d="M1 1.200 5.500 5.700 10 1.200" stroke="#c5c5c5" stroke-width="1.150" fill="none"/></svg><svg class="abs" style="left:107.0px;top:496.0px;" width="16" height="13" viewBox="0 0 16 13"><g transform="translate(0 .9) scale(1 .9)"><path d="M0 1.600C0 .9.500.500 1.100.500H5.300L6.800 2H12.600c.6 0 1.100.4 1.100 1.100V4H3.400L.9 11.300C.3 11.300 0 10.800 0 10.300z" fill="#ab47bc"/><path d="M3.300 4.600H15.300L12.900 11.500H.9z" fill="#ab47bc"/><rect x="7.400" y="6.800" width="7.600" height="6" fill="#e1bee7"/><path d="M7.400 9.600h7.600M11.200 9.600v3.200" stroke="#ab47bc" stroke-width=".8"/></g></svg><span class="t" style="left:128.0px;top:491.7px;height:22px;line-height:22px;font-size:13.00px;color:#ccc;letter-spacing:0.370px;">presentation</span>
<svg class="abs" style="left:100.0px;top:518.5px;" width="7" height="11" viewBox="0 0 7 11"><path d="M1.200 1 5.700 5.500 1.200 10" stroke="#c5c5c5" stroke-width="1.150" fill="none"/></svg><svg class="abs" style="left:115.0px;top:518.0px;" width="16" height="13" viewBox="0 0 16 13"><g transform="translate(0 .9) scale(1 .9)"><path d="M0 1.700C0 1 .500.500 1.200.500H5.400L6.900 2H12.800c.7 0 1.200.5 1.200 1.200v7.100c0 .7-.5 1.200-1.200 1.200H1.200C.5 11.500 0 11 0 10.300z" fill="#ef5350"/><rect x="7" y="5.400" width="7.600" height="7.200" rx=".8" fill="#ffcdd2"/><path d="M8.200 7.400h5.200M8.200 9h5.200M8.200 10.600h5.200" stroke="#ef5350" stroke-width=".9"/></g></svg><span class="t" style="left:136.0px;top:513.7px;height:22px;line-height:22px;font-size:13.00px;color:#ccc;letter-spacing:0.370px;">view models</span>
<svg class="abs" style="left:97.5px;top:542.5px;" width="11" height="7" viewBox="0 0 11 7"><path d="M1 1.200 5.500 5.700 10 1.200" stroke="#c5c5c5" stroke-width="1.150" fill="none"/></svg><svg class="abs" style="left:115.0px;top:540.0px;" width="16" height="13" viewBox="0 0 16 13"><g transform="translate(0 .9) scale(1 .9)"><path d="M0 1.600C0 .9.500.500 1.100.500H5.300L6.800 2H12.600c.6 0 1.100.4 1.100 1.100V4H3.400L.9 11.300C.3 11.300 0 10.800 0 10.300z" fill="#ff5722"/><path d="M3.300 4.600H15.300L12.900 11.500H.9z" fill="#ff5722"/><rect x="7.200" y="6.400" width="8" height="6.600" rx="1" fill="#ffccbc"/><path d="M10.300 8.300 9 9.700l1.300 1.400M12.100 8.300l1.300 1.400-1.300 1.400" stroke="#ff5722" stroke-width=".8" fill="none"/></g></svg><span class="t" style="left:136.0px;top:535.7px;height:22px;line-height:22px;font-size:13.00px;color:#ccc;letter-spacing:0.370px;">views</span>
<svg class="abs" style="left:105.5px;top:564.5px;" width="11" height="7" viewBox="0 0 11 7"><path d="M1 1.200 5.500 5.700 10 1.200" stroke="#c5c5c5" stroke-width="1.150" fill="none"/></svg><svg class="abs" style="left:123.0px;top:562.0px;" width="16" height="13" viewBox="0 0 16 13"><g transform="translate(0 .9) scale(1 .9)"><path d="M0 1.600C0 .9.500.500 1.100.500H5.300L6.800 2H12.600c.6 0 1.100.4 1.100 1.100V4H3.400L.9 11.300C.3 11.300 0 10.800 0 10.300z" fill="#c0ca33"/><path d="M3.300 4.600H15.300L12.900 11.500H.9z" fill="#c0ca33"/><rect x="7.400" y="6" width="3" height="3" fill="#f0f4c3"/><rect x="11.600" y="5.400" width="3" height="3" fill="#f0f4c3" transform="rotate(45 13.100 6.900)"/><rect x="7.400" y="10" width="3" height="3" fill="#f0f4c3"/><rect x="11.400" y="10" width="3" height="3" fill="#f0f4c3"/></g></svg><span class="t" style="left:144.0px;top:557.7px;height:22px;line-height:22px;font-size:13.00px;color:#ccc;letter-spacing:0.370px;">widgets</span>
<div class="abs" style="left:342px;top:326px;width:0;height:0"></div><div class="abs" style="left:338.500px;top:322.500px;width:7px;height:7px;border-radius:50%;background:#6e5d54"></div>
<svg class="abs" style="left:131.0px;top:582.9px;" width="14.2" height="14.2" viewBox="0 0 14.2 14.2"><path d="M7.400 0 10 2.850 2.600 3.200z" fill="#22ccff"/><path d="M2.600 3.200 10 2.850 14.100 5.900V11.600L12.400 13.400z" fill="#0b5fa8"/><path d="M2.600 3.200 12.400 13.400 11.800 14H5.700L3.400 10.800z" fill="#40b8f8"/><path d="M2.600 3.200 0 7.300 3.400 10.800z" fill="#1c86d6"/></svg>
<span class="t" style="left:152.0px;top:579.7px;height:22px;line-height:22px;font-size:13.00px;color:#ccc;letter-spacing:0.331px;">auth_screens_header.dart</span>
<div class="abs" style="left:48px;top:601px;width:315px;height:22px;background:#37373d"></div>
<svg class="abs" style="left:131.0px;top:604.9px;" width="14.2" height="14.2" viewBox="0 0 14.2 14.2"><path d="M7.400 0 10 2.850 2.600 3.200z" fill="#22ccff"/><path d="M2.600 3.200 10 2.850 14.100 5.900V11.600L12.400 13.400z" fill="#0b5fa8"/><path d="M2.600 3.200 12.400 13.400 11.800 14H5.700L3.400 10.800z" fill="#40b8f8"/><path d="M2.600 3.200 0 7.300 3.400 10.800z" fill="#1c86d6"/></svg>
<span class="t" style="left:152.0px;top:601.7px;height:22px;line-height:22px;font-size:13.00px;color:#ccc;letter-spacing:0.370px;">auth_view_body.dart</span>
<svg class="abs" style="left:131.0px;top:626.9px;" width="14.2" height="14.2" viewBox="0 0 14.2 14.2"><path d="M7.400 0 10 2.850 2.600 3.200z" fill="#22ccff"/><path d="M2.600 3.200 10 2.850 14.100 5.900V11.600L12.400 13.400z" fill="#0b5fa8"/><path d="M2.600 3.200 12.400 13.400 11.800 14H5.700L3.400 10.800z" fill="#40b8f8"/><path d="M2.600 3.200 0 7.300 3.400 10.800z" fill="#1c86d6"/></svg>
<span class="t" style="left:152.0px;top:623.7px;height:22px;line-height:22px;font-size:13.00px;color:#ccc;letter-spacing:0.370px;">custom_auth_footer.dart</span>
<svg class="abs" style="left:131.0px;top:648.9px;" width="14.2" height="14.2" viewBox="0 0 14.2 14.2"><path d="M7.400 0 10 2.850 2.600 3.200z" fill="#22ccff"/><path d="M2.600 3.200 10 2.850 14.100 5.900V11.600L12.400 13.400z" fill="#0b5fa8"/><path d="M2.600 3.200 12.400 13.400 11.800 14H5.700L3.400 10.800z" fill="#40b8f8"/><path d="M2.600 3.200 0 7.300 3.400 10.800z" fill="#1c86d6"/></svg>
<span class="t" style="left:152.0px;top:645.7px;height:22px;line-height:22px;font-size:13.00px;color:#ccc;letter-spacing:0.370px;">custom_auth_textfield.dart</span>
<svg class="abs" style="left:131.0px;top:670.9px;" width="14.2" height="14.2" viewBox="0 0 14.2 14.2"><path d="M7.400 0 10 2.850 2.600 3.200z" fill="#22ccff"/><path d="M2.600 3.200 10 2.850 14.100 5.900V11.600L12.400 13.400z" fill="#0b5fa8"/><path d="M2.600 3.200 12.400 13.400 11.800 14H5.700L3.400 10.800z" fill="#40b8f8"/><path d="M2.600 3.200 0 7.300 3.400 10.800z" fill="#1c86d6"/></svg>
<span class="t" style="left:152.0px;top:667.7px;height:22px;line-height:22px;font-size:13.00px;color:#ccc;letter-spacing:0.430px;">custom_google_auth_button.dart</span>
<svg class="abs" style="left:131.0px;top:692.9px;" width="14.2" height="14.2" viewBox="0 0 14.2 14.2"><path d="M7.400 0 10 2.850 2.600 3.200z" fill="#22ccff"/><path d="M2.600 3.200 10 2.850 14.100 5.900V11.600L12.400 13.400z" fill="#0b5fa8"/><path d="M2.600 3.200 12.400 13.400 11.800 14H5.700L3.400 10.800z" fill="#40b8f8"/><path d="M2.600 3.200 0 7.300 3.400 10.800z" fill="#1c86d6"/></svg>
<span class="t" style="left:152.0px;top:689.7px;height:22px;line-height:22px;font-size:13.00px;color:#ccc;letter-spacing:0.370px;">forgot_password_header.dart</span>
<svg class="abs" style="left:131.0px;top:714.9px;" width="14.2" height="14.2" viewBox="0 0 14.2 14.2"><path d="M7.400 0 10 2.850 2.600 3.200z" fill="#22ccff"/><path d="M2.600 3.200 10 2.850 14.100 5.900V11.600L12.400 13.400z" fill="#0b5fa8"/><path d="M2.600 3.200 12.400 13.400 11.800 14H5.700L3.400 10.800z" fill="#40b8f8"/><path d="M2.600 3.200 0 7.300 3.400 10.800z" fill="#1c86d6"/></svg>
<span class="t" style="left:152.0px;top:711.7px;height:22px;line-height:22px;font-size:13.00px;color:#ccc;letter-spacing:0.389px;">forgot_password_view_body.dart</span>
<svg class="abs" style="left:131.0px;top:736.9px;" width="14.2" height="14.2" viewBox="0 0 14.2 14.2"><path d="M7.400 0 10 2.850 2.600 3.200z" fill="#22ccff"/><path d="M2.600 3.200 10 2.850 14.100 5.900V11.600L12.400 13.400z" fill="#0b5fa8"/><path d="M2.600 3.200 12.400 13.400 11.800 14H5.700L3.400 10.800z" fill="#40b8f8"/><path d="M2.600 3.200 0 7.300 3.400 10.800z" fill="#1c86d6"/></svg>
<span class="t" style="left:152.0px;top:733.7px;height:22px;line-height:22px;font-size:13.00px;color:#ccc;letter-spacing:0.370px;">log_in_view_body.dart</span>
<svg class="abs" style="left:131.0px;top:758.9px;" width="14.2" height="14.2" viewBox="0 0 14.2 14.2"><path d="M7.400 0 10 2.850 2.600 3.200z" fill="#22ccff"/><path d="M2.600 3.200 10 2.850 14.100 5.900V11.600L12.400 13.400z" fill="#0b5fa8"/><path d="M2.600 3.200 12.400 13.400 11.800 14H5.700L3.400 10.800z" fill="#40b8f8"/><path d="M2.600 3.200 0 7.300 3.400 10.800z" fill="#1c86d6"/></svg>
<span class="t" style="left:152.0px;top:755.7px;height:22px;line-height:22px;font-size:13.00px;color:#ccc;letter-spacing:0.370px;">login_button_bloc_provider.dart</span>
<svg class="abs" style="left:131.0px;top:780.9px;" width="14.2" height="14.2" viewBox="0 0 14.2 14.2"><path d="M7.400 0 10 2.850 2.600 3.200z" fill="#22ccff"/><path d="M2.600 3.200 10 2.850 14.100 5.900V11.600L12.400 13.400z" fill="#0b5fa8"/><path d="M2.600 3.200 12.400 13.400 11.800 14H5.700L3.400 10.800z" fill="#40b8f8"/><path d="M2.600 3.200 0 7.300 3.400 10.800z" fill="#1c86d6"/></svg>
<span class="t" style="left:152.0px;top:777.7px;height:22px;line-height:22px;font-size:13.00px;color:#ccc;letter-spacing:0.370px;">login_form.dart</span>
<svg class="abs" style="left:131.0px;top:802.9px;" width="14.2" height="14.2" viewBox="0 0 14.2 14.2"><path d="M7.400 0 10 2.850 2.600 3.200z" fill="#22ccff"/><path d="M2.600 3.200 10 2.850 14.100 5.900V11.600L12.400 13.400z" fill="#0b5fa8"/><path d="M2.600 3.200 12.400 13.400 11.800 14H5.700L3.400 10.800z" fill="#40b8f8"/><path d="M2.600 3.200 0 7.300 3.400 10.800z" fill="#1c86d6"/></svg>
<span class="t" style="left:152.0px;top:799.7px;height:22px;line-height:22px;font-size:13.00px;color:#ccc;letter-spacing:0.370px;">sign_up_form.dart</span>
<svg class="abs" style="left:131.0px;top:824.9px;" width="14.2" height="14.2" viewBox="0 0 14.2 14.2"><path d="M7.400 0 10 2.850 2.600 3.200z" fill="#22ccff"/><path d="M2.600 3.200 10 2.850 14.100 5.900V11.600L12.400 13.400z" fill="#0b5fa8"/><path d="M2.600 3.200 12.400 13.400 11.800 14H5.700L3.400 10.800z" fill="#40b8f8"/><path d="M2.600 3.200 0 7.300 3.400 10.800z" fill="#1c86d6"/></svg>
<span class="t" style="left:152.0px;top:821.7px;height:22px;line-height:22px;font-size:13.00px;color:#ccc;letter-spacing:0.370px;">sign_up_view_body.dart</span>
<svg class="abs" style="left:131.0px;top:846.9px;" width="14.2" height="14.2" viewBox="0 0 14.2 14.2"><path d="M7.400 0 10 2.850 2.600 3.200z" fill="#22ccff"/><path d="M2.600 3.200 10 2.850 14.100 5.900V11.600L12.400 13.400z" fill="#0b5fa8"/><path d="M2.600 3.200 12.400 13.400 11.800 14H5.700L3.400 10.800z" fill="#40b8f8"/><path d="M2.600 3.200 0 7.300 3.400 10.800z" fill="#1c86d6"/></svg>
<span class="t" style="left:152.0px;top:843.7px;height:22px;line-height:22px;font-size:13.00px;color:#ccc;letter-spacing:0.370px;">sigup_button_bloc_provider.dart</span>
<div class="abs" style="left:108px;top:579px;width:1px;height:286px;background:#585858"></div>
<svg class="abs" style="left:123.3px;top:868.9px;" width="14.2" height="14.2" viewBox="0 0 14.2 14.2"><path d="M7.400 0 10 2.850 2.600 3.200z" fill="#22ccff"/><path d="M2.600 3.200 10 2.850 14.100 5.900V11.600L12.400 13.400z" fill="#0b5fa8"/><path d="M2.600 3.200 12.400 13.400 11.800 14H5.700L3.400 10.800z" fill="#40b8f8"/><path d="M2.600 3.200 0 7.300 3.400 10.800z" fill="#1c86d6"/></svg>
<span class="t" style="left:144.0px;top:865.7px;height:22px;line-height:22px;font-size:13.00px;color:#ccc;letter-spacing:0.370px;">auth_view.dart</span>
<svg class="abs" style="left:123.3px;top:890.9px;" width="14.2" height="14.2" viewBox="0 0 14.2 14.2"><path d="M7.400 0 10 2.850 2.600 3.200z" fill="#22ccff"/><path d="M2.600 3.200 10 2.850 14.100 5.900V11.600L12.400 13.400z" fill="#0b5fa8"/><path d="M2.600 3.200 12.400 13.400 11.800 14H5.700L3.400 10.800z" fill="#40b8f8"/><path d="M2.600 3.200 0 7.300 3.400 10.800z" fill="#1c86d6"/></svg>
<span class="t" style="left:144.0px;top:887.7px;height:22px;line-height:22px;font-size:13.00px;color:#ccc;letter-spacing:0.370px;">forgot_password_view.dart</span>
<svg class="abs" style="left:123.3px;top:912.9px;" width="14.2" height="14.2" viewBox="0 0 14.2 14.2"><path d="M7.400 0 10 2.850 2.600 3.200z" fill="#22ccff"/><path d="M2.600 3.200 10 2.850 14.100 5.900V11.600L12.400 13.400z" fill="#0b5fa8"/><path d="M2.600 3.200 12.400 13.400 11.800 14H5.700L3.400 10.800z" fill="#40b8f8"/><path d="M2.600 3.200 0 7.300 3.400 10.800z" fill="#1c86d6"/></svg>
<span class="t" style="left:144.0px;top:909.7px;height:22px;line-height:22px;font-size:13.00px;color:#ccc;letter-spacing:0.370px;">log_in_view.dart</span>
<div class="abs" style="left:48px;top:928px;width:315px;height:22px;background:#181818;border-top:1px solid #2b2b2b"></div>
<svg class="abs" style="left:55.5px;top:934.0px;" width="7" height="11" viewBox="0 0 7 11"><path d="M1.200 1 5.700 5.500 1.200 10" stroke="#c5c5c5" stroke-width="1.150" fill="none"/></svg>
<span class="t" style="left:68.0px;top:932.7px;height:15px;line-height:15px;font-size:11.00px;color:#ccc;letter-spacing:0.246px;font-weight:700;">OUTLINE</span>
<div class="abs" style="left:48px;top:950px;width:315px;height:22px;background:#181818;border-top:1px solid #2b2b2b"></div>
<svg class="abs" style="left:55.5px;top:956.0px;" width="7" height="11" viewBox="0 0 7 11"><path d="M1.200 1 5.700 5.500 1.200 10" stroke="#c5c5c5" stroke-width="1.150" fill="none"/></svg>
<span class="t" style="left:68.0px;top:954.7px;height:15px;line-height:15px;font-size:11.00px;color:#ccc;letter-spacing:0.271px;font-weight:700;">TIMELINE</span>
<div class="abs" style="left:48px;top:972px;width:315px;height:22px;background:#181818;border-top:1px solid #2b2b2b"></div>
<svg class="abs" style="left:55.5px;top:978.0px;" width="7" height="11" viewBox="0 0 7 11"><path d="M1.200 1 5.700 5.500 1.200 10" stroke="#c5c5c5" stroke-width="1.150" fill="none"/></svg>
<span class="t" style="left:68.0px;top:976.7px;height:15px;line-height:15px;font-size:11.00px;color:#ccc;letter-spacing:0.059px;font-weight:700;">DEPENDENCIES</span>
<style>.ln{position:absolute;left:364px;width:45.800px;text-align:right;height:21px;line-height:21px;font:14px/21px "Liberation Mono",monospace;color:#6e7681;white-space:pre}.cl{position:absolute;height:21px;font:14px/21px "Liberation Mono",monospace;white-space:pre;color:#d4d4d4;-webkit-text-stroke:.3px}.ig{position:absolute;width:1px;background:#3a3a3a}</style>
<div class="abs" style="left:364px;top:60px;width:1101px;height:935px;background:#1f1f1f"></div>
<div class="abs" style="left:364px;top:60px;width:1101px;height:35px;background:#181818;border-bottom:1px solid #2b2b2b"></div>
<div class="abs" style="left:364px;top:60px;width:150px;height:35px;background:#181818;border-right:1px solid #2b2b2b;border-bottom:1px solid #2b2b2b"></div>
<svg class="abs" style="left:375.0px;top:70.9px;" width="14.2" height="14.2" viewBox="0 0 14.2 14.2"><path d="M7.400 0 10 2.850 2.600 3.200z" fill="#22ccff"/><path d="M2.600 3.200 10 2.850 14.100 5.900V11.600L12.400 13.400z" fill="#0b5fa8"/><path d="M2.600 3.200 12.400 13.400 11.800 14H5.700L3.400 10.800z" fill="#40b8f8"/><path d="M2.600 3.200 0 7.300 3.400 10.800z" fill="#1c86d6"/></svg>
<span class="t" style="left:396.0px;top:68.7px;height:18px;line-height:18px;font-size:13.00px;color:#9d9d9d;letter-spacing:0.405px;">auth_view.dart</span>
<div class="abs" style="left:514px;top:60px;width:183px;height:35px;background:#1f1f1f;border-right:1px solid #2b2b2b;border-top:1px solid #0078d4"></div>
<svg class="abs" style="left:525.0px;top:70.9px;" width="14.2" height="14.2" viewBox="0 0 14.2 14.2"><path d="M7.400 0 10 2.850 2.600 3.200z" fill="#22ccff"/><path d="M2.600 3.200 10 2.850 14.100 5.900V11.600L12.400 13.400z" fill="#0b5fa8"/><path d="M2.600 3.200 12.400 13.400 11.800 14H5.700L3.400 10.800z" fill="#40b8f8"/><path d="M2.600 3.200 0 7.300 3.400 10.800z" fill="#1c86d6"/></svg>
<span class="t" style="left:545.8px;top:68.7px;height:18px;line-height:18px;font-size:13.00px;color:#fff;letter-spacing:0.115px;font-style:italic;">auth_view_body.dart</span>
<svg class="abs" style="left:677.0px;top:73.0px;" width="10" height="10" viewBox="0 0 10 10"><path d="M1 1 9 9M9 1 1 9" stroke="#ddd" stroke-width="1.150"/></svg>
<svg class="abs" style="left:1226.0px;top:71.0px;" width="14" height="14" viewBox="0 0 14 14"><path d="M1.500 1.200 12.600 7 1.500 12.800z" stroke="#c5c5c5" stroke-width="1.150" fill="none" stroke-linejoin="round"/></svg>
<svg class="abs" style="left:1250.0px;top:70.0px;" width="17" height="16" viewBox="0 0 17 16"><g stroke="#c5c5c5" stroke-width="1.050" fill="none"><ellipse cx="8.500" cy="9" rx="3.600" ry="4.600"/><path d="M6 5.200a2.600 2.600 0 0 1 5 0M4.900 7.800 2.400 6.600M4.900 10H1.800M5.200 12.200 2.600 14M12.100 7.800l2.500-1.200M12.100 10h3.100M11.800 12.200l2.600 1.800M7 7.600l3 3M10 7.600l-3 3M5.600 3.200 4 1.400M11.400 3.200 13 1.400"/></g></svg>
<svg class="abs" style="left:1277.0px;top:70.0px;" width="13" height="16" viewBox="0 0 13 16"><rect x="3.400" y="1" width="8.600" height="14" rx="1.200" stroke="#fff" stroke-width="1.500" fill="none"/><circle cx="3.800" cy="8" r="2.700" fill="#fff"/><circle cx="3.800" cy="8" r="1.100" fill="#181818"/></svg>
<svg class="abs" style="left:1301.0px;top:71.0px;" width="20" height="14" viewBox="0 0 20 14"><g stroke="#c5c5c5" stroke-width="1.100" fill="none"><circle cx="12" cy="7" r="4.200"/><path d="M7.800 7H1.400M4.400 4 1.400 7l3 3M16.200 7h2"/></g></svg>
<svg class="abs" style="left:1329.0px;top:71.0px;" width="18" height="14" viewBox="0 0 18 14"><g stroke="#7a7a7a" stroke-width="1.100" fill="none"><circle cx="9" cy="7" r="4"/><path d="M1.400 7H5M13 7h3.600"/></g></svg>
<svg class="abs" style="left:1354.0px;top:71.0px;" width="20" height="14" viewBox="0 0 20 14"><g stroke="#7a7a7a" stroke-width="1.100" fill="none"><circle cx="7" cy="7" r="4.200"/><path d="M.800 7h2M11.200 7h6.400M14.600 4l3 3-3 3"/></g></svg>
<svg class="abs" style="left:1380.0px;top:70.0px;" width="17" height="17" viewBox="0 0 17 17"><g stroke="#c5c5c5" stroke-width="1.100" fill="none"><circle cx="8.500" cy="8.500" r="7.600"/><path d="M6.800 4.600v8M6.800 6c0 1.600 4.200 1.600 4.200 3"/></g><circle cx="6.800" cy="4.400" r="1.100" fill="#c5c5c5"/><circle cx="6.800" cy="12.600" r="1.100" fill="#c5c5c5"/><circle cx="11.200" cy="8.800" r="1.100" fill="#c5c5c5"/></svg>
<svg class="abs" style="left:1408.0px;top:71.0px;" width="15" height="14" viewBox="0 0 15 14"><rect x=".600" y=".600" width="13.400" height="12.800" rx="1.200" stroke="#c5c5c5" stroke-width="1.150" fill="none"/><path d="M7.300.600v12.800" stroke="#c5c5c5" stroke-width="1.150"/></svg>
<span class="t" style="left:1434.0px;top:67.5px;height:20px;line-height:20px;font-size:14.00px;color:#c5c5c5;letter-spacing:0.004px;font-weight:700;">···</span>
<span class="t" style="left:380.0px;top:98.2px;height:18px;line-height:18px;font-size:13.00px;color:#a9a9a9;letter-spacing:0.164px;">lib</span>
<svg class="abs" style="left:398.3px;top:101.5px;" width="7" height="11" viewBox="0 0 7 11"><path d="M1.200 1 5.700 5.500 1.200 10" stroke="#a0a0a0" stroke-width="1.150" fill="none"/></svg>
<span class="t" style="left:410.0px;top:98.2px;height:18px;line-height:18px;font-size:13.00px;color:#a9a9a9;letter-spacing:0.378px;">features</span>
<svg class="abs" style="left:464.8px;top:101.5px;" width="7" height="11" viewBox="0 0 7 11"><path d="M1.200 1 5.700 5.500 1.200 10" stroke="#a0a0a0" stroke-width="1.150" fill="none"/></svg>
<span class="t" style="left:476.0px;top:98.2px;height:18px;line-height:18px;font-size:13.00px;color:#a9a9a9;letter-spacing:0.175px;">auth</span>
<svg class="abs" style="left:506.8px;top:101.5px;" width="7" height="11" viewBox="0 0 7 11"><path d="M1.200 1 5.700 5.500 1.200 10" stroke="#a0a0a0" stroke-width="1.150" fill="none"/></svg>
<span class="t" style="left:519.0px;top:98.2px;height:18px;line-height:18px;font-size:13.00px;color:#a9a9a9;letter-spacing:0.371px;">presentation</span>
<svg class="abs" style="left:599.8px;top:101.5px;" width="7" height="11" viewBox="0 0 7 11"><path d="M1.200 1 5.700 5.500 1.200 10" stroke="#a0a0a0" stroke-width="1.150" fill="none"/></svg>
<span class="t" style="left:611.5px;top:98.2px;height:18px;line-height:18px;font-size:13.00px;color:#a9a9a9;letter-spacing:-0.101px;">views</span>
<svg class="abs" style="left:648.3px;top:101.5px;" width="7" height="11" viewBox="0 0 7 11"><path d="M1.200 1 5.700 5.500 1.200 10" stroke="#a0a0a0" stroke-width="1.150" fill="none"/></svg>
<span class="t" style="left:660.0px;top:98.2px;height:18px;line-height:18px;font-size:13.00px;color:#a9a9a9;letter-spacing:0.560px;">widgets</span>
<svg class="abs" style="left:712.8px;top:101.5px;" width="7" height="11" viewBox="0 0 7 11"><path d="M1.200 1 5.700 5.500 1.200 10" stroke="#a0a0a0" stroke-width="1.150" fill="none"/></svg>
<svg class="abs" style="left:726.0px;top:99.4px;" width="14.2" height="14.2" viewBox="0 0 14.2 14.2"><path d="M7.400 0 10 2.850 2.600 3.200z" fill="#22ccff"/><path d="M2.600 3.200 10 2.850 14.100 5.900V11.600L12.400 13.400z" fill="#0b5fa8"/><path d="M2.600 3.200 12.400 13.400 11.800 14H5.700L3.400 10.800z" fill="#40b8f8"/><path d="M2.600 3.200 0 7.300 3.400 10.800z" fill="#1c86d6"/></svg>
<span class="t" style="left:746.0px;top:98.2px;height:18px;line-height:18px;font-size:13.00px;color:#a9a9a9;letter-spacing:0.368px;">auth_view_body.dart</span>
<svg class="abs" style="left:877.0px;top:101.5px;" width="7" height="11" viewBox="0 0 7 11"><path d="M1.200 1 5.700 5.500 1.200 10" stroke="#a0a0a0" stroke-width="1.150" fill="none"/></svg>
<svg class="abs" style="left:889.0px;top:99.5px;" width="15" height="14" viewBox="0 0 15 14"><g stroke="#ee9d28" stroke-width="1.150" fill="none"><path d="M3.600 2 1.400 4.200 3.600 6.400 5.800 4.200zM5.800 4.200h4M7.800 4.200v6h2"/><path d="M11.800 2.400 9.800 4.200l2 1.800 2-1.800zM11.800 8.400 9.800 10.200l2 1.800 2-1.800z"/></g></svg>
<span class="t" style="left:907.5px;top:98.2px;height:18px;line-height:18px;font-size:13.00px;color:#a9a9a9;letter-spacing:0.224px;">AuthViewBody</span>
<svg class="abs" style="left:999.5px;top:101.5px;" width="7" height="11" viewBox="0 0 7 11"><path d="M1.200 1 5.700 5.500 1.200 10" stroke="#a0a0a0" stroke-width="1.150" fill="none"/></svg>
<svg class="abs" style="left:1012.0px;top:99.0px;" width="15" height="15" viewBox="0 0 15 15"><g stroke="#b180d7" stroke-width="1.100" fill="none" stroke-linejoin="round"><path d="M7.500 1.200 13.400 4v7L7.500 13.800 1.600 11V4zM1.600 4l5.900 2.800L13.400 4M7.500 6.800v7"/></g></svg>
<span class="t" style="left:1030.0px;top:98.2px;height:18px;line-height:18px;font-size:13.00px;color:#a9a9a9;letter-spacing:0.265px;">AuthViewBody</span>
<div class="abs" style="left:364px;top:117px;width:1101px;height:877px;overflow:hidden"><div class="abs" style="left:-364px;top:-117px;width:1920px;height:1080px">
<div class="ln" style="top:128.5px">29</div><div class="cl" style="top:128.5px;left:453.1px"><span style="color:#86dbff">@override</span></div>
<div class="ig" style="left:436.3px;top:138px;height:10.500px"></div>
<span class="t" style="left:453.0px;top:148.9px;height:17px;line-height:17px;font-size:12.00px;color:#999;letter-spacing:0.252px;">Codeium: Refactor | Explain | Generate Function Comment |</span>
<svg class="abs" style="left:790.5px;top:151.8px;" width="10" height="10" viewBox="0 0 10 10"><path d="M1 1 9 9M9 1 1 9" stroke="#999" stroke-width="1.100"/></svg>
<div class="ln" style="top:167.0px">30</div><div class="cl" style="top:167.0px;left:453.1px"><span style="color:#12d1b1">Widget</span><span style="color:#d6d6d6"> </span><span style="color:#e0e0a6">build</span><span style="color:#e66ee2">(</span><span style="color:#12d1b1">BuildContext</span><span style="color:#d6d6d6"> </span><span style="color:#86dbff">context</span><span style="color:#e66ee2">)</span><span style="color:#d6d6d6"> </span><span style="color:#e66ee2">{</span></div>
<div class="ln" style="top:188.0px">31</div><div class="cl" style="top:188.0px;left:469.9px"><span style="color:#dc82d6">return</span><span style="color:#d6d6d6"> </span><span style="color:#12d1b1">Column</span><span style="color:#0f98ff">(</span></div>
<div class="ln" style="top:209.0px">32</div><div class="cl" style="top:209.0px;left:486.7px"><span style="color:#86dbff">children</span><span style="color:#d6d6d6">:</span><span style="color:#d6d6d6"> </span><span style="color:#ffd500">[</span></div>
<div class="ln" style="top:230.0px">33</div><div class="cl" style="top:230.0px;left:503.5px"><span style="color:#12d1b1">Padding</span><span style="color:#e66ee2">(</span></div>
<div class="ln" style="top:251.0px">34</div><div class="cl" style="top:251.0px;left:520.3px"><span style="color:#86dbff">padding</span><span style="color:#d6d6d6">:</span><span style="color:#d6d6d6"> </span><span style="color:#12d1b1">EdgeInsets</span><span style="color:#d6d6d6">.</span><span style="color:#e0e0a6">symmetric</span><span style="color:#0f98ff">(</span><span style="color:#86dbff">horizontal</span><span style="color:#d6d6d6">:</span><span style="color:#d6d6d6"> </span><span style="color:#b8d3a6">18</span><span style="color:#d6d6d6">.</span><span style="color:#86dbff">w</span><span style="color:#0f98ff">)</span><span style="color:#d6d6d6">,</span></div>
<div class="ln" style="top:272.0px">35</div><div class="cl" style="top:272.0px;left:520.3px"><span style="color:#86dbff">child</span><span style="color:#d6d6d6">:</span><span style="color:#d6d6d6"> </span><span style="color:#12d1b1">AuthScreensHeader</span><span style="color:#0f98ff">(</span></div>
<div class="ln" style="top:293.0px">36</div><div class="cl" style="top:293.0px;left:537.1px"><span style="color:#86dbff">text</span><span style="color:#d6d6d6">:</span><span style="color:#d6d6d6"> </span><span style="color:#12d1b1">Text</span><span style="color:#ffd500">(</span></div>
<div class="ln" style="top:314.0px">37</div><div class="cl" style="top:314.0px;left:553.9px"><span style="color:#12d1b1">S</span><span style="color:#d6d6d6">.</span><span style="color:#e0e0a6">of</span><span style="color:#e66ee2">(</span><span style="color:#86dbff">context</span><span style="color:#e66ee2">)</span><span style="color:#d6d6d6">.</span><span style="color:#86dbff">effortlesslyManage</span><span style="color:#d6d6d6">,</span></div>
<div class="ln" style="top:335.0px">38</div><div class="cl" style="top:335.0px;left:553.9px"><span style="color:#86dbff">style</span><span style="color:#d6d6d6">:</span><span style="color:#d6d6d6"> </span><span style="color:#12d1b1">Styles</span><span style="color:#d6d6d6">.</span><span style="color:#86dbff">style14w400</span><span style="color:#d6d6d6">,</span></div>
<div class="ln" style="top:356.0px">39</div><div class="cl" style="top:356.0px;left:553.9px"><span style="color:#86dbff">textAlign</span><span style="color:#d6d6d6">:</span><span style="color:#d6d6d6"> </span><span style="color:#12d1b1">TextAlign</span><span style="color:#d6d6d6">.</span><span style="color:#30bfff">center</span><span style="color:#d6d6d6">,</span></div>
<div class="ln" style="top:377.0px">40</div><div class="cl" style="top:377.0px;left:537.1px"><span style="color:#ffd500">)</span><span style="color:#d6d6d6">,</span><span style="color:#9a9a9a;margin-left:2.5px"> // Text</span></div>
<div class="ln" style="top:398.0px">41</div><div class="cl" style="top:398.0px;left:520.3px"><span style="color:#0f98ff">)</span><span style="color:#d6d6d6">,</span><span style="color:#9a9a9a;margin-left:2.5px"> // AuthScreensHeader</span></div>
<div class="ln" style="top:419.0px">42</div><div class="cl" style="top:419.0px;left:503.5px"><span style="color:#e66ee2">)</span><span style="color:#d6d6d6">,</span><span style="color:#9a9a9a;margin-left:2.5px"> // Padding</span></div>
<div class="ln" style="top:440.0px">43</div><div class="cl" style="top:440.0px;left:503.5px"><span style="color:#12d1b1">SizedBox</span><span style="color:#e66ee2">(</span></div>
<div class="ln" style="top:461.0px">44</div><div class="cl" style="top:461.0px;left:520.3px"><span style="color:#86dbff">height</span><span style="color:#d6d6d6">:</span><span style="color:#d6d6d6"> </span><span style="color:#b8d3a6">40</span><span style="color:#d6d6d6">.</span><span style="color:#86dbff">h</span><span style="color:#d6d6d6">,</span></div>
<div class="ln" style="top:482.0px">45</div><div class="cl" style="top:482.0px;left:503.5px"><span style="color:#e66ee2">)</span><span style="color:#d6d6d6">,</span><span style="color:#9a9a9a;margin-left:2.5px"> // SizedBox</span></div>
<div class="ln" style="top:503.0px">46</div><div class="cl" style="top:503.0px;left:503.5px"><span style="color:#12d1b1">Hero</span><span style="color:#e66ee2">(</span></div>
<div class="ln" style="top:524.0px">47</div><div class="cl" style="top:524.0px;left:520.3px"><span style="color:#86dbff">tag</span><span style="color:#d6d6d6">:</span><span style="color:#d6d6d6"> </span><span style="color:#e8906e">&quot;logIn-button&quot;</span><span style="color:#d6d6d6">,</span></div>
<div class="ln" style="top:545.0px">48</div><div class="cl" style="top:545.0px;left:520.3px"><span style="color:#86dbff">child</span><span style="color:#d6d6d6">:</span><span style="color:#d6d6d6"> </span><span style="color:#12d1b1">Material</span><span style="color:#0f98ff">(</span></div>
<div class="ln" style="top:566.0px">49</div><div class="cl" style="top:566.0px;left:537.1px"><span style="color:#86dbff">type</span><span style="color:#d6d6d6">:</span><span style="color:#d6d6d6"> </span><span style="color:#12d1b1">MaterialType</span><span style="color:#d6d6d6">.</span><span style="color:#30bfff">transparency</span><span style="color:#d6d6d6">,</span></div>
<div class="ln" style="top:587.0px">50</div><div class="cl" style="top:587.0px;left:537.1px"><span style="color:#86dbff">child</span><span style="color:#d6d6d6">:</span><span style="color:#d6d6d6"> </span><span style="color:#12d1b1">CustomHollowButton</span><span style="color:#ffd500">(</span></div>
<div class="ln" style="top:608.0px">51</div><div class="cl" style="top:608.0px;left:553.9px"><span style="color:#86dbff">margin</span><span style="color:#d6d6d6">:</span><span style="color:#d6d6d6"> </span><span style="color:#12d1b1">EdgeInsets</span><span style="color:#d6d6d6">.</span><span style="color:#e0e0a6">symmetric</span><span style="color:#e66ee2">(</span><span style="color:#86dbff">horizontal</span><span style="color:#d6d6d6">:</span><span style="color:#d6d6d6"> </span><span style="color:#b8d3a6">18</span><span style="color:#d6d6d6">.</span><span style="color:#86dbff">w</span><span style="color:#e66ee2">)</span><span style="color:#d6d6d6">,</span></div>
<div class="ln" style="top:629.0px">52</div><div class="cl" style="top:629.0px;left:553.9px"><span style="color:#86dbff">text</span><span style="color:#d6d6d6">:</span><span style="color:#d6d6d6"> </span><span style="color:#12d1b1">S</span><span style="color:#d6d6d6">.</span><span style="color:#e0e0a6">of</span><span style="color:#e66ee2">(</span><span style="color:#86dbff">context</span><span style="color:#e66ee2">)</span><span style="color:#d6d6d6">.</span><span style="color:#86dbff">logIn</span><span style="color:#d6d6d6">,</span></div>
<div class="ln" style="top:650.0px">53</div><div class="cl" style="top:650.0px;left:553.9px"><span style="color:#86dbff">style</span><span style="color:#d6d6d6">:</span><span style="color:#d6d6d6"> </span><span style="color:#12d1b1">Styles</span><span style="color:#d6d6d6">.</span><span style="color:#86dbff">style20W700white</span><span style="color:#d6d6d6">,</span></div>
<div class="ln" style="top:671.0px">54</div><div class="cl" style="top:671.0px;left:553.9px"><span style="color:#86dbff">onTap</span><span style="color:#d6d6d6">:</span><span style="color:#d6d6d6"> </span><span style="color:#e66ee2">()</span><span style="color:#d6d6d6"> </span><span style="color:#e66ee2">{</span></div>
<div class="ln" style="top:692.0px">55</div><div class="cl" style="top:692.0px;left:570.7px"><span style="color:#12d1b1">Navigator</span><span style="color:#d6d6d6">.</span><span style="color:#e0e0a6">of</span><span style="color:#0f98ff">(</span><span style="color:#86dbff">context</span><span style="color:#0f98ff">)</span></div>
<div class="ln" style="top:713.0px">56</div><div class="cl" style="top:713.0px;left:604.3px"><span style="color:#d6d6d6">.</span><span style="color:#e0e0a6">pushNamed</span><span style="color:#0f98ff">(</span><span style="color:#12d1b1">AppRouter</span><span style="color:#d6d6d6">.</span><span style="color:#86dbff">logIn</span><span style="color:#d6d6d6">, </span><span style="color:#86dbff">arguments</span><span style="color:#d6d6d6">:</span><span style="color:#d6d6d6"> </span><span style="color:#86dbff">context</span><span style="color:#0f98ff">)</span><span style="color:#d6d6d6">;</span></div>
<div class="ln" style="top:734.0px">57</div><div class="cl" style="top:734.0px;left:553.9px"><span style="color:#e66ee2">}</span><span style="color:#d6d6d6">,</span></div>
<div class="ln" style="top:755.0px">58</div><div class="cl" style="top:755.0px;left:537.1px"><span style="color:#ffd500">)</span><span style="color:#d6d6d6">,</span><span style="color:#9a9a9a;margin-left:2.5px"> // CustomHollowButton</span></div>
<div class="ln" style="top:776.0px">59</div><div class="cl" style="top:776.0px;left:520.3px"><span style="color:#0f98ff">)</span><span style="color:#d6d6d6">,</span><span style="color:#9a9a9a;margin-left:2.5px"> // Material</span></div>
<div class="ln" style="top:797.0px">60</div><div class="cl" style="top:797.0px;left:503.5px"><span style="color:#e66ee2">)</span><span style="color:#d6d6d6">,</span><span style="color:#9a9a9a;margin-left:2.5px"> // Hero</span></div>
<div class="ln" style="top:818.0px">61</div><div class="cl" style="top:818.0px;left:503.5px"><span style="color:#12d1b1">SizedBox</span><span style="color:#e66ee2">(</span></div>
<div class="ln" style="top:839.0px">62</div><div class="cl" style="top:839.0px;left:520.3px"><span style="color:#86dbff">height</span><span style="color:#d6d6d6">:</span><span style="color:#d6d6d6"> </span><span style="color:#b8d3a6">18</span><span style="color:#d6d6d6">.</span><span style="color:#86dbff">h</span><span style="color:#d6d6d6">,</span></div>
<div class="ln" style="top:860.0px">63</div><div class="cl" style="top:860.0px;left:503.5px"><span style="color:#e66ee2">)</span><span style="color:#d6d6d6">,</span><span style="color:#9a9a9a;margin-left:2.5px"> // SizedBox</span></div>
<div class="ln" style="top:881.0px">64</div><div class="cl" style="top:881.0px;left:503.5px"><span style="color:#12d1b1">Hero</span><span style="color:#e66ee2">(</span></div>
<div class="ln" style="top:902.0px">65</div><div class="cl" style="top:902.0px;left:520.3px"><span style="color:#86dbff">tag</span><span style="color:#d6d6d6">:</span><span style="color:#d6d6d6"> </span><span style="color:#e8906e">&quot;signUp-button&quot;</span><span style="color:#d6d6d6">,</span></div>
<div class="ln" style="top:923.0px">66</div><div class="cl" style="top:923.0px;left:520.3px"><span style="color:#86dbff">child</span><span style="color:#d6d6d6">:</span><span style="color:#d6d6d6"> </span><span style="color:#12d1b1">Material</span><span style="color:#0f98ff">(</span></div>
<div class="ln" style="top:944.0px">67</div><div class="cl" style="top:944.0px;left:537.1px"><span style="color:#86dbff">type</span><span style="color:#d6d6d6">:</span><span style="color:#d6d6d6"> </span><span style="color:#12d1b1">MaterialType</span><span style="color:#d6d6d6">.</span><span style="color:#30bfff">transparency</span><span style="color:#d6d6d6">,</span></div>
<div class="ln" style="top:965.0px">68</div><div class="cl" style="top:965.0px;left:537.1px"><span style="color:#86dbff">child</span><span style="color:#d6d6d6">:</span><span style="color:#d6d6d6"> </span><span style="color:#12d1b1">CustomButton</span><span style="color:#ffd500">(</span></div>
<div class="ln" style="top:986.0px">69</div><div class="cl" style="top:986.0px;left:553.9px"><span style="color:#86dbff">gradient</span><span style="color:#d6d6d6">:</span><span style="color:#d6d6d6"> </span><span style="color:#12d1b1">Constants</span><span style="color:#d6d6d6">.</span><span style="color:#86dbff">customButtonGradient</span><span style="color:#d6d6d6">,</span></div>
<div class="ig" style="left:436.3px;top:166.0px;height:841.0px"></div>
<div class="ig" style="left:453.1px;top:188.0px;height:819.0px"></div>
<div class="ig" style="left:469.9px;top:209.0px;height:798.0px"></div>
<div class="ig" style="left:486.7px;top:230.0px;height:777.0px"></div>
<div class="ig" style="left:503.5px;top:251.0px;height:168.0px"></div>
<div class="ig" style="left:503.5px;top:461.0px;height:21.0px"></div>
<div class="ig" style="left:503.5px;top:524.0px;height:273.0px"></div>
<div class="ig" style="left:503.5px;top:839.0px;height:21.0px"></div>
<div class="ig" style="left:503.5px;top:902.0px;height:105.0px"></div>
<div class="ig" style="left:520.3px;top:293.0px;height:105.0px"></div>
<div class="ig" style="left:520.3px;top:566.0px;height:210.0px"></div>
<div class="ig" style="left:520.3px;top:944.0px;height:63.0px"></div>
<div class="ig" style="left:537.1px;top:314.0px;height:63.0px"></div>
<div class="ig" style="left:537.1px;top:608.0px;height:147.0px"></div>
<div class="ig" style="left:537.1px;top:986.0px;height:21.0px"></div>
<div class="ig" style="left:553.9px;top:692.0px;height:42.0px"></div>
<div class="ig" style="left:570.7px;top:713.0px;height:21.0px"></div>
<div class="ig" style="left:587.5px;top:713.0px;height:21.0px"></div>
</div></div>
<div class="abs" style="left:364px;top:117px;width:972px;height:21px;background:#1f1f1f"></div><div class="abs" style="left:364px;top:138px;width:971px;height:2.600px;background:linear-gradient(180deg,#000 0,#000 70%,rgba(0,0,0,.4) 100%)"></div>
<div class="ln" style="top:118.0px">22</div><div class="cl" style="top:118.0px;left:436.3px"><span style="color:#3e9fe0">class</span><span style="color:#d6d6d6"> </span><span style="color:#12d1b1">_AuthViewBodyState</span><span style="color:#d6d6d6"> </span><span style="color:#3e9fe0">extends</span><span style="color:#d6d6d6"> </span><span style="color:#12d1b1">State</span><span style="color:#d6d6d6">&lt;</span><span style="color:#12d1b1">AuthViewBody</span><span style="color:#d6d6d6">&gt;</span><span style="color:#d6d6d6"> </span><span style="color:#ffd500">{</span></div>
<div class="abs" style="left:1110px;top:140.500px;width:1px;height:853.500px;background:#3c3c3c"></div>
<svg class="abs" style="left:0;top:0" width="1920" height="1080" viewBox="0 0 1920 1080" opacity=".66"><path d="M1343 117.65h6M1343 119.65h6M1343 121.65h6M1343 123.65h6M1343 125.65h6M1343 127.65h6M1343 129.65h6M1343 131.65h6M1343 133.65h6M1343 137.65h6M1343 139.65h6M1343 141.65h6M1343 145.65h5M1362 145.65h7M1345 147.65h5M1365 147.65h5M1343 159.65h5M1368 159.65h7M1345 163.65h4M1347 167.65h5M1351 325.65h5M1351 333.65h5M1414 343.65h4" stroke="#3e9fe0" stroke-width="1.300" stroke-dasharray="1.700 .300" fill="none"/><path d="M1350 117.65h31M1350 119.65h52M1350 121.65h39M1350 123.65h48M1350 125.65h43M1350 127.65h42M1350 129.65h81M1350 131.65h48M1350 133.65h88M1350 137.65h36M1350 139.65h31M1350 141.65h26M1358 209.65h14M1358 245.65h15M1357 301.65h4M1386 325.65h8" stroke="#e8906e" stroke-width="1.300" stroke-dasharray="1.700 .300" fill="none"/><path d="M1381 117.65h1M1402 119.65h1M1389 121.65h1M1398 123.65h1M1393 125.65h1M1392 127.65h1M1431 129.65h1M1398 131.65h1M1438 133.65h1M1386 137.65h1M1381 139.65h1M1376 141.65h1M1385 145.65h1M1363 147.65h2M1370 147.65h1M1374 147.65h3M1345 151.65h1M1350 153.65h1M1363 153.65h1M1376 153.65h2M1379 153.65h2M1400 153.65h3M1343 155.65h1M1381 159.65h1M1394 159.65h1M1396 159.65h1M1345 161.65h1M1359 163.65h2M1362 163.65h1M1359 165.65h1M1384 165.65h2M1403 165.65h1M1414 165.65h3M1352 167.65h1M1362 167.65h3M1345 169.65h1M1345 173.65h1M1357 175.65h1M1378 175.65h1M1380 175.65h1M1360 177.65h1M1359 179.65h1M1358 181.65h1M1372 183.65h1M1382 183.65h1M1397 183.65h1M1399 183.65h2M1377 185.65h1M1365 187.65h1M1358 189.65h1M1361 189.65h1M1369 189.65h2M1389 189.65h1M1370 191.65h1M1382 191.65h1M1377 193.65h1M1384 193.65h1M1355 195.65h2M1353 197.65h2M1351 199.65h2M1359 201.65h1M1363 203.65h1M1365 203.65h1M1351 205.65h2M1355 207.65h1M1372 209.65h1M1368 211.65h1M1373 213.65h1M1386 213.65h1M1380 215.65h1M1375 217.65h1M1385 217.65h1M1400 217.65h1M1402 217.65h2M1364 219.65h1M1367 219.65h1M1375 219.65h2M1382 219.65h1M1370 221.65h1M1387 221.65h1M1364 223.65h2M1367 223.65h1M1368 225.65h1M1371 225.65h1M1379 225.65h1M1363 227.65h1M1373 227.65h1M1383 227.65h1M1389 227.65h1M1409 227.65h2M1357 229.65h2M1355 231.65h2M1353 233.65h2M1351 235.65h2M1359 237.65h1M1363 239.65h1M1365 239.65h1M1351 241.65h2M1355 243.65h1M1373 245.65h1M1368 247.65h1M1373 249.65h1M1386 249.65h1M1374 251.65h1M1376 253.65h1M1397 253.65h1M1364 255.65h1M1367 255.65h1M1375 255.65h2M1383 255.65h1M1370 257.65h1M1387 257.65h1M1364 259.65h2M1367 259.65h1M1368 261.65h1M1371 261.65h1M1379 261.65h1M1363 263.65h1M1373 263.65h1M1383 263.65h1M1390 263.65h1M1410 263.65h2M1357 265.65h2M1355 267.65h2M1353 269.65h2M1351 271.65h2M1359 273.65h1M1363 275.65h1M1365 275.65h1M1351 277.65h2M1358 279.65h1M1372 281.65h1M1382 281.65h1M1369 283.65h1M1371 283.65h1M1365 285.65h1M1367 287.65h1M1368 289.65h1M1370 289.65h1M1368 291.65h1M1370 291.65h1M1372 293.65h1M1378 293.65h1M1357 295.65h2M1355 297.65h2M1359 299.65h1M1361 301.65h1M1370 303.65h1M1382 303.65h1M1391 303.65h1M1405 303.65h1M1411 303.65h2M1355 305.65h2M1363 307.65h1M1371 309.65h1M1373 311.65h1M1375 311.65h1M1386 311.65h1M1388 311.65h1M1402 311.65h1M1404 311.65h1M1419 311.65h1M1425 311.65h2M1355 313.65h2M1353 315.65h2M1351 317.65h2M1359 319.65h1M1363 321.65h1M1365 321.65h1M1351 323.65h2M1379 325.65h1M1394 325.65h1M1409 325.65h1M1426 325.65h2M1359 327.65h1M1363 329.65h1M1365 329.65h1M1351 331.65h2M1373 333.65h3M1359 335.65h1M1360 337.65h1M1374 339.65h1M1379 339.65h1M1390 339.65h1M1392 339.65h2M1372 341.65h1M1368 343.65h2M1371 343.65h3M1386 343.65h1M1388 343.65h1M1391 343.65h1M1399 343.65h2M1405 343.65h1M1418 343.65h2M1357 345.65h2M1355 347.65h2M1353 349.65h2M1351 351.65h2M1349 353.65h2M1347 355.65h2M1345 357.65h1M1343 359.65h1" stroke="#d4d4d4" stroke-width="1.300" stroke-dasharray="1.700 .300" fill="none"/><path d="M1349 145.65h12M1370 145.65h14M1351 147.65h12M1345 153.65h5M1351 153.65h12M1382 153.65h18M1349 159.65h18M1376 159.65h5M1382 159.65h12M1347 165.65h12M1386 165.65h17M1345 175.65h6M1358 175.65h12M1354 177.65h6M1351 181.65h7M1362 183.65h10M1360 185.65h17M1361 187.65h4M1357 189.65h1M1364 191.65h6M1368 193.65h9M1351 201.65h8M1351 207.65h4M1360 211.65h8M1361 213.65h12M1362 215.65h18M1365 217.65h10M1363 219.65h1M1364 221.65h6M1359 225.65h9M1374 227.65h9M1351 237.65h8M1351 243.65h4M1360 247.65h8M1361 249.65h12M1362 251.65h12M1367 253.65h9M1363 255.65h1M1364 257.65h6M1359 261.65h9M1374 263.65h9M1351 273.65h8M1351 279.65h7M1362 281.65h10M1362 285.65h3M1366 293.65h6M1355 299.65h4M1364 303.65h6M1399 303.65h6M1355 307.65h8M1364 309.65h7M1413 311.65h6M1351 319.65h8M1357 325.65h22M1403 325.65h6M1351 327.65h8M1357 333.65h16M1351 335.65h8M1353 337.65h7M1364 339.65h10M1362 341.65h10M1382 343.65h4M1387 343.65h1" stroke="#12d1b1" stroke-width="1.300" stroke-dasharray="1.700 .300" fill="none"/><path d="M1371 147.65h3M1346 151.65h8M1346 161.65h8M1404 165.65h10M1346 173.65h8M1371 175.65h7M1349 179.65h9M1353 183.65h8M1383 183.65h11M1398 183.65h1M1353 185.65h6M1355 187.65h5M1362 189.65h7M1371 189.65h18M1357 191.65h6M1371 191.65h11M1357 193.65h10M1378 193.65h6M1353 203.65h7M1364 203.65h1M1353 209.65h4M1353 211.65h6M1355 213.65h5M1374 213.65h12M1355 215.65h6M1357 217.65h7M1386 217.65h11M1401 217.65h1M1357 219.65h5M1368 219.65h7M1377 219.65h5M1357 221.65h6M1371 221.65h16M1357 223.65h6M1372 225.65h7M1384 227.65h5M1391 227.65h10M1402 227.65h7M1353 239.65h7M1364 239.65h1M1353 245.65h4M1353 247.65h6M1355 249.65h5M1374 249.65h12M1355 251.65h6M1357 253.65h9M1377 253.65h20M1357 255.65h5M1368 255.65h7M1377 255.65h6M1357 257.65h6M1371 257.65h16M1357 259.65h6M1372 261.65h7M1384 263.65h6M1392 263.65h10M1403 263.65h7M1353 275.65h7M1364 275.65h1M1353 281.65h8M1355 283.65h11M1370 283.65h1M1355 285.65h6M1357 287.65h9M1359 289.65h7M1369 289.65h1M1359 291.65h6M1369 291.65h1M1359 293.65h6M1373 293.65h5M1357 303.65h6M1371 303.65h11M1392 303.65h6M1406 303.65h5M1357 309.65h6M1361 311.65h10M1374 311.65h1M1377 311.65h7M1387 311.65h1M1390 311.65h10M1403 311.65h1M1406 311.65h6M1420 311.65h5M1353 321.65h7M1364 321.65h1M1380 325.65h5M1396 325.65h6M1410 325.65h16M1353 329.65h7M1364 329.65h1M1355 339.65h8M1380 339.65h7M1391 339.65h1M1355 341.65h6M1357 343.65h10M1375 343.65h6M1392 343.65h7M1401 343.65h4M1407 343.65h6" stroke="#86dbff" stroke-width="1.300" stroke-dasharray="1.700 .300" fill="none"/><path d="M1365 153.65h11M1350 163.65h9M1360 165.65h24M1353 167.65h9M1352 175.65h5M1373 183.65h9M1359 189.65h2M1376 217.65h9M1365 219.65h2M1369 225.65h2M1364 227.65h9M1365 255.65h2M1369 261.65h2M1364 263.65h9M1373 281.65h9M1383 303.65h8M1375 339.65h4M1389 343.65h2" stroke="#e0e0a6" stroke-width="1.300" stroke-dasharray="1.700 .300" fill="none"/><path d="M1347 177.65h6" stroke="#dc82d6" stroke-width="1.300" stroke-dasharray="1.700 .300" fill="none"/><path d="M1395 183.65h2M1361 203.65h2M1398 217.65h2M1361 239.65h2M1361 275.65h2M1367 283.65h2M1367 289.65h1M1366 291.65h2M1372 311.65h1M1385 311.65h1M1401 311.65h1M1361 321.65h2M1361 329.65h2M1388 339.65h2" stroke="#b8d3a6" stroke-width="1.300" stroke-dasharray="1.700 .300" fill="none"/></svg><div class="abs" style="left:1450px;top:117px;width:1px;height:877px;background:#2d2d2d"></div><div class="abs" style="left:1450px;top:117px;width:14px;height:161px;background:#1c1c1f;border-left:1px solid #101014;border-top:1px solid #101014"></div><div class="abs" style="left:1451px;top:278px;width:13px;height:217px;background:#474747"></div><div class="abs" style="left:1451px;top:203px;width:13px;height:2px;background:#8a8a8a"></div>
<div class="abs" style="left:0;top:994px;width:1465px;height:22px;background:#181818;border-top:1px solid #2b2b2b"></div>
<div class="abs" style="left:0;top:995px;width:34px;height:21px;background:#0078d4"></div>
<svg class="abs" style="left:11.5px;top:999.3px;" width="12" height="12" viewBox="0 0 12 12"><path d="M1 4.200 5 7.600 1 11M10.600 1 6.600 4.400 10.600 7.800" stroke="#fff" stroke-width="1.150" fill="none"/></svg>
<svg class="abs" style="left:40.0px;top:997.0px;" width="12" height="15" viewBox="0 0 12 15"><g fill="none" stroke="#ccc" stroke-width="1.1"><circle cx="3.4" cy="3" r="1.7"/><circle cx="3.4" cy="12" r="1.7"/><circle cx="9.2" cy="5.2" r="1.7"/><path d="M3.4 4.7v5.6M9.2 6.900c0 2.400-2.800 3-5.800 3.300"/></g></svg>
<span class="t" style="left:57.5px;top:996.7px;height:17px;line-height:17px;font-size:12.00px;color:#ccc;letter-spacing:0.364px;">main*</span>
<svg class="abs" style="left:96.0px;top:998.0px;" width="14" height="14" viewBox="0 0 14 14"><g fill="none" stroke="#ccc" stroke-width="1.2"><path d="M2 6.200A5.200 5.200 0 0 1 11.600 4.400M12 7.800A5.200 5.200 0 0 1 2.400 9.600"/><path d="M11.800 1.600v3h-3M2.200 12.400v-3h3"/></g></svg>
<svg class="abs" style="left:124.0px;top:997.0px;" width="13" height="16" viewBox="0 0 13 16"><g fill="none" stroke="#ccc" stroke-width="1.1"><circle cx="3" cy="3" r="1.6"/><circle cx="3" cy="12.600" r="1.600"/><circle cx="10" cy="7" r="1.600"/><path d="M3 4.600v6.400M6.400 1v14M10 8.600c0 2.400-1.600 3.400-3.600 3.600"/></g></svg>
<svg class="abs" style="left:154.0px;top:997.0px;" width="15" height="15" viewBox="0 0 15 15"><g fill="none" stroke="#ccc" stroke-width="1.1" stroke-linejoin="round"><path d="M13.600 1.400c-4.200 0-7.400 2.400-9 7l2 2c4.600-1.600 7-4.800 7-9zM4.800 8 2 8.400l2.200-3M7 10.200l-.4 2.800 3-2.200M1.400 13.600l2-2"/><circle cx="9.600" cy="5.400" r="1"/></g></svg>
<svg class="abs" style="left:169.0px;top:998.0px;" width="14" height="14" viewBox="0 0 14 14"><g fill="none" stroke="#ccc" stroke-width="1.1"><path d="M8 2.600l3.400 3.400-2.600 2.600-3.400-3.400zM6.400 6.200 3.200 9.400l1.400 1.400 3.200-3.200M3.600 10.400 1.200 12.800M9.600 1.400l3 3M11.400 2.600l1.600-1.600"/></g></svg>
<span class="t" style="left:185.5px;top:996.7px;height:17px;line-height:17px;font-size:12.00px;color:#ccc;letter-spacing:0.290px;">Launchpad</span>
<span class="t" style="left:264.0px;top:996.7px;height:17px;line-height:17px;font-size:12.00px;color:#ccc;letter-spacing:0.319px;">Pieces Settings</span>
<svg class="abs" style="left:368.0px;top:998.0px;" width="13" height="13" viewBox="0 0 13 13"><g fill="none" stroke="#ccc" stroke-width="1.1"><circle cx="6.500" cy="6.500" r="5.600"/><path d="M4.300 4.300l4.400 4.400M8.700 4.300 4.300 8.700"/></g></svg>
<span class="t" style="left:384.5px;top:996.7px;height:17px;line-height:17px;font-size:12.00px;color:#ccc;">0</span>
<svg class="abs" style="left:396.0px;top:998.0px;" width="14" height="13" viewBox="0 0 14 13"><g fill="none" stroke="#ccc" stroke-width="1.1" stroke-linejoin="round"><path d="M7 1.200 13 12H1z"/><path d="M7 5v3.600M7 9.800v1"/></g></svg>
<span class="t" style="left:413.0px;top:996.7px;height:17px;line-height:17px;font-size:12.00px;color:#ccc;">0</span>
<svg class="abs" style="left:424.0px;top:998.0px;" width="13" height="13" viewBox="0 0 13 13"><g fill="none" stroke="#ccc" stroke-width="1.1"><circle cx="6.500" cy="6.500" r="5.600"/><path d="M6.500 5.800v3.800M6.500 3.400v1.100"/></g></svg>
<span class="t" style="left:442.0px;top:996.7px;height:17px;line-height:17px;font-size:12.00px;color:#ccc;letter-spacing:0.493px;">138</span>
<svg class="abs" style="left:481.0px;top:998.0px;" width="13" height="14" viewBox="0 0 13 14"><g fill="none" stroke="#ccc" stroke-width="1"><path d="M6.500 6.400 3.600 13M6.500 6.400 9.400 13M4.600 10.600h3.800"/><circle cx="6.500" cy="5" r="1.200"/><path d="M3.800 2.200a4 4 0 0 0 0 5.600M9.200 2.200a4 4 0 0 1 0 5.600M1.900 1a6 6 0 0 0 0 8M11.100 1a6 6 0 0 1 0 8"/></g></svg>
<span class="t" style="left:497.5px;top:996.7px;height:17px;line-height:17px;font-size:12.00px;color:#ccc;">0</span>
<svg class="abs" style="left:598.0px;top:997.0px;" width="12" height="16" viewBox="0 0 12 16"><g fill="none" stroke="#ccc" stroke-width="1.1"><circle cx="6" cy="8" r="2.400"/><path d="M6 1v4.600M6 10.400V15"/></g></svg>
<span class="t" style="left:614.5px;top:996.7px;height:17px;line-height:17px;font-size:12.00px;color:#ccc;letter-spacing:0.345px;">You, 3 months ago</span>
<span class="t" style="left:735.5px;top:996.7px;height:17px;line-height:17px;font-size:12.00px;color:#ccc;letter-spacing:0.357px;">Ln 16, Col 9</span>
<span class="t" style="left:820.5px;top:996.7px;height:17px;line-height:17px;font-size:12.00px;color:#ccc;letter-spacing:0.293px;">Spaces: 2</span>
<span class="t" style="left:892.5px;top:996.7px;height:17px;line-height:17px;font-size:12.00px;color:#ccc;letter-spacing:0.501px;">UTF-8</span>
<span class="t" style="left:945.0px;top:996.7px;height:17px;line-height:17px;font-size:12.00px;color:#ccc;letter-spacing:-0.252px;">LF</span>
<span class="t" style="left:974.0px;top:997.2px;height:15px;line-height:15px;font-size:10.50px;color:#ccc;letter-spacing:0.856px;">{ }</span>
<span class="t" style="left:993.0px;top:996.7px;height:17px;line-height:17px;font-size:12.00px;color:#ccc;letter-spacing:0.457px;">Dart</span>
<span class="t" style="left:1031.0px;top:996.7px;height:17px;line-height:17px;font-size:12.00px;color:#ccc;letter-spacing:0.366px;">Pixel 7a API 33 (android-x64 emulator)</span>
<span class="t" style="left:1267.5px;top:996.7px;height:17px;line-height:17px;font-size:12.00px;color:#ccc;letter-spacing:0.235px;">Codeium: {...}</span>
<svg class="abs" style="left:1361.0px;top:998.0px;" width="13" height="13" viewBox="0 0 13 13"><g fill="none" stroke="#ccc" stroke-width="1.1"><circle cx="6.500" cy="6.500" r="5.600"/><path d="M10.400 2.600 2.600 10.400"/></g></svg>
<span class="t" style="left:1377.0px;top:996.7px;height:17px;line-height:17px;font-size:12.00px;color:#ccc;letter-spacing:0.415px;">Prettier</span>
<svg class="abs" style="left:1435.0px;top:997.0px;" width="14" height="15" viewBox="0 0 14 15"><g fill="none" stroke="#ccc" stroke-width="1.1" stroke-linejoin="round"><path d="M3.400 10.600V6.400a3.600 3.600 0 0 1 5-3.300M10.600 8v2.600l1.200 1.400H2.200l1.200-1.400M5.800 13.400a1.300 1.300 0 0 0 2.400 0"/></g><circle cx="10.600" cy="4" r="2.200" fill="#ccc"/></svg>
</div><div class="abs" style="left:0;top:0;width:1465px;height:991px;border-radius:10px;border:1px solid rgba(255,255,255,.17);pointer-events:none"></div></div>
<svg class="abs" style="left:1829.0px;top:39.2px;filter:drop-shadow(0 1px 1.500px rgba(0,0,0,.4));" width="52" height="52" viewBox="0 0 52 52"><defs><linearGradient id="acf" x1="0" x2="0" y1="0" y2="1"><stop offset="0" stop-color="#f3c777"/><stop offset=".55" stop-color="#efc06c"/><stop offset="1" stop-color="#e6b25c"/></linearGradient><clipPath id="acc"><rect x="0" y="0" width="52" height="52" rx="11.500"/></clipPath></defs><g clip-path="url(#acc)"><rect width="52" height="52" fill="#a87a4e"/><rect width="52" height="7" fill="#8e6440" opacity=".6"/><path d="M4.500 17Q3.500 6.500 11 5L23.500 2.600Q29.500 2 29.500 8V17z" fill="#1fb6f2"/><path d="M23 17V9.500Q24 5.200 29.500 5.700L42.500 7.200Q47.500 8 47.500 12.500V17z" fill="#f0357a"/><path d="M0 12H12.500Q14.700 12 15.600 10.200L16.400 8.800Q17.400 7.200 19.500 7.200H33.500Q35.600 7.200 36.500 8.800L37.300 10.200Q38.300 12 40.500 12H52V52H0z" fill="url(#acf)"/><g transform="translate(26 32)"><g transform="rotate(-15)"><path d="M-8.700 -1.500A8.800 8.800 0 0 1 -1.000 -8.700" stroke="#b3844f" stroke-width="5.200" fill="none"/><path d="M-1.500 -13.500 5.200 -8.200 -1.500 -3.000z" fill="#b3844f"/></g><g transform="rotate(105)"><path d="M-8.700 -1.500A8.800 8.800 0 0 1 -1.000 -8.700" stroke="#b3844f" stroke-width="5.200" fill="none"/><path d="M-1.500 -13.500 5.200 -8.200 -1.500 -3.000z" fill="#b3844f"/></g><g transform="rotate(225)"><path d="M-8.700 -1.500A8.800 8.800 0 0 1 -1.000 -8.700" stroke="#b3844f" stroke-width="5.200" fill="none"/><path d="M-1.500 -13.500 5.200 -8.200 -1.500 -3.000z" fill="#b3844f"/></g></g></g></svg>
<span class="t" style="left:1819.0px;top:102.5px;height:18px;line-height:18px;font-size:12.50px;color:#fff;letter-spacing:0.035px;font-weight:700;text-shadow:0 1px 2px rgba(0,0,0,.7);">AppCleaner</span>
<div class="abs" style="left:1840px;top:718px;width:44px;height:44px;border-radius:5px;background:linear-gradient(180deg,#16b4f4 0%,#12a8ee 100%);box-shadow:0 1px 2px rgba(0,0,0,.3)"></div>
<span class="t" style="left:1857.5px;top:774.5px;height:18px;line-height:18px;font-size:12.50px;color:#fff;letter-spacing:-0.452px;font-weight:700;text-shadow:0 1px 2px rgba(0,0,0,.7);">ks</span>
<div class="abs" style="left:1840px;top:830px;width:44px;height:44px;border-radius:5px;background:linear-gradient(180deg,#16b4f4 0%,#12a8ee 100%);box-shadow:0 1px 2px rgba(0,0,0,.3)"></div>
<span class="t" style="left:1857.5px;top:886.5px;height:18px;line-height:18px;font-size:12.50px;color:#fff;letter-spacing:-0.755px;font-weight:700;text-shadow:0 1px 2px rgba(0,0,0,.7);">ects</span>
<div class="abs" style="left:1848px;top:156.500px;width:35px;height:14px;border-radius:5px;background:#18b0f2"></div>
<div class="abs" style="left:1858px;top:673px;width:32px;height:7px;border-radius:0 0 3px 3px;background:rgba(240,230,225,.75)"></div>
<div id="emu" class="abs" style="left:1467px;top:131px;width:388px;height:891px;border-radius:10px;overflow:hidden;background:#0e0e19;box-shadow:0 0 0 1px rgba(0,0,0,.55),0 10px 28px rgba(0,0,0,.45)"><div class="abs" style="left:-1467px;top:-131px;width:1920px;height:1080px">
<div class="abs" style="left:1467px;top:131px;width:388px;height:29.500px;background:#3c2b27;border-bottom:1px solid #1c1412"></div>
<span class="t" style="left:1536.5px;top:135.5px;height:18px;line-height:18px;font-size:13.00px;color:#92867f;letter-spacing:0.405px;font-weight:700;">Android Emulator - Pixel_7a_API_33:5554</span>
<div class="abs" style="left:1467px;top:160.500px;width:388px;height:862px;background:#0e0e19"></div>
<svg class="abs" style="left:1467px;top:160px" width="388" height="400" viewBox="1467 160 388 400">
<defs><filter id="eb1" filterUnits="userSpaceOnUse" x="1300" y="0" width="700" height="800"><feGaussianBlur stdDeviation="14"/></filter><filter id="eb2" filterUnits="userSpaceOnUse" x="1300" y="0" width="700" height="800"><feGaussianBlur stdDeviation="5"/></filter><filter id="eb3" filterUnits="userSpaceOnUse" x="1300" y="0" width="700" height="800"><feGaussianBlur stdDeviation="22"/></filter>
<linearGradient id="esky" x1="0" x2="0" y1="0" y2="1"><stop offset="0" stop-color="#a2a3af"/><stop offset=".03" stop-color="#adaeba"/><stop offset=".08" stop-color="#c2c3ce"/><stop offset=".18" stop-color="#d8d9e3"/><stop offset=".3" stop-color="#e8e8ef"/><stop offset=".5" stop-color="#e4e5ee"/><stop offset="1" stop-color="#dcdfee"/></linearGradient>
<clipPath id="ecl"><rect x="1467" y="160" width="388" height="400"/></clipPath></defs>
<g clip-path="url(#ecl)">
<rect x="1467" y="160" width="388" height="400" fill="url(#esky)"/>

<polygon points="1420,410 1500,368 1580,326 1660,288 1730,268 1800,252 1900,232 1900,600 1420,600" fill="#a9bcea" filter="url(#eb1)"/>
<polygon points="1420,470 1520,430 1640,360 1760,300 1900,250 1900,600 1420,600" fill="#9db2e6" filter="url(#eb3)"/>
<polygon points="1440,478 1470,468 1520,452 1600,421 1655,398 1688,374 1700,346 1720,326 1750,318 1775,323 1797,322 1820,304 1845,268 1870,220 1900,200 1900,620 1440,620" fill="#0e0e19" filter="url(#eb2)"/>
<ellipse cx="1856" cy="225" rx="7" ry="42" fill="#2a2220" opacity=".8" filter="url(#eb2)"/>
</g></svg>
<svg class="abs" style="left:1467px;top:560px" width="388" height="462" viewBox="1467 560 388 462"><defs><filter id="eb4" filterUnits="userSpaceOnUse" x="1400" y="500" width="520" height="600"><feGaussianBlur stdDeviation="3"/></filter></defs><g fill="none" stroke="#142346" stroke-linecap="round" opacity=".7"><path d="M1855 748C1820 790 1800 800 1778 838S1740 880 1712 905 1668 960 1632 1004" stroke-width="5" filter="url(#eb4)"/><path d="M1855 790C1830 815 1815 850 1790 868S1752 912 1722 930 1690 975 1660 1010" stroke-width="3" filter="url(#eb4)" opacity=".7"/></g></svg>
<span class="t" style="left:1474.5px;top:162.2px;height:18px;line-height:18px;font-size:12.50px;color:#fff;letter-spacing:0.168px;-webkit-text-stroke:.2px #fff;">2:23</span>
<svg class="abs" style="left:1787.0px;top:164.0px;" width="13" height="12" viewBox="0 0 13 12"><path d="M6.500 11.400.400 3.600a9.400 9.400 0 0 1 12.200 0z" fill="#fff"/></svg>
<svg class="abs" style="left:1802.0px;top:164.0px;" width="12" height="12" viewBox="0 0 12 12"><path d="M11 1v10.200H.800z" fill="none" stroke="#fff" stroke-width="1.150"/><path d="M11 5.500V11.200H5.300z" fill="#fff" opacity=".0"/></svg>
<svg class="abs" style="left:1820.0px;top:163.0px;" width="8" height="14" viewBox="0 0 8 14"><path d="M2.400 0h3.200v1.400H7c.5 0 1 .4 1 1V13c0 .5-.5 1-1 1H1c-.5 0-1-.5-1-1V2.400c0-.6.500-1 1-1h1.400z" fill="#fff"/></svg>
<span class="t" style="left:1503.0px;top:247.0px;height:24px;line-height:24px;font-size:17.50px;color:#fdfdfe;letter-spacing:0.165px;text-shadow:0 0 3px rgba(90,90,110,.45);-webkit-text-stroke:.25px #fff;">Fri, Oct 18</span>
<div class="abs" style="left:1496.4px;top:675.7px;width:56.6px;height:56.6px;border-radius:50%;background:#fff"></div>
<div class="abs" style="left:1587.0px;top:675.7px;width:56.6px;height:56.6px;border-radius:50%;background:#fff"></div>
<div class="abs" style="left:1677.5px;top:675.7px;width:56.6px;height:56.6px;border-radius:50%;background:#fff"></div>
<div class="abs" style="left:1767.9px;top:675.7px;width:56.6px;height:56.6px;border-radius:50%;background:#fff"></div>
<svg class="abs" style="left:1509.7px;top:688.0px;" width="31" height="33" viewBox="0 0 31 33"><path d="M3 1.600c-.4.300-.6.800-.6 1.500v26.800c0 .7.200 1.200.6 1.500L17.600 16.500z" fill="#4285f4"/><path d="M3 1.600 17.600 16.500 22.400 11.700 5.400 1.900C4.500 1.300 3.600 1.200 3 1.600z" fill="#34a853"/><path d="M3 31.400c.6.400 1.500.3 2.400-.3l17-9.800-4.800-4.800z" fill="#ea4335"/><path d="M22.400 11.700 17.600 16.500l4.800 4.800 5.600-3.200c1.600-.9 1.600-2.400 0-3.300z" fill="#fbbc04"/></svg>
<svg class="abs" style="left:1596.3px;top:689.5px;" width="38" height="29" viewBox="0 0 38 29"><path d="M2.600 28.400h6V13.800L0 7.400v18.400c0 1.400 1.200 2.600 2.600 2.600z" fill="#4285f4"/><path d="M29.400 28.400h6c1.400 0 2.600-1.200 2.600-2.600V7.400l-8.600 6.400z" fill="#34a853"/><path d="M29.400 2.800v11L38 7.400V4c0-3.200-3.600-5-6.200-3.100z" fill="#fbbc04"/><path d="M8.600 13.800v-11L19 10.600 29.400 2.800v11L19 21.600z" fill="#ea4335"/><path d="M0 4v3.400l8.600 6.400v-11L6.200.900C3.600-1 0 .800 0 4z" fill="#c5221f"/></svg>
<svg class="abs" style="left:1685.8px;top:684.0px;" width="40" height="40" viewBox="0 0 40 40"><path d="M20 20V1.500a9.300 9.300 0 0 1 0 18.500z" fill="#ea4335" transform="translate(0 0)"/><path d="M20 20h18.500a9.300 9.300 0 0 1-18.500 0z" fill="#4285f4"/><path d="M20 20v18.500a9.300 9.300 0 0 1 0-18.500z" fill="#34a853"/><path d="M20 20H1.500a9.300 9.300 0 0 1 18.500 0z" fill="#fbbc04"/></svg>
<div class="abs" style="left:1776.7px;top:690.3px;width:39px;height:27.500px;border-radius:7px;background:#ff0000"></div>
<svg class="abs" style="left:1791.2px;top:697.5px;" width="12" height="13" viewBox="0 0 12 13"><path d="M0 0 11.500 6.500 0 13z" fill="#fff"/></svg>
<span class="t" style="left:1495.7px;top:742.5px;height:18px;line-height:18px;font-size:12.50px;color:#fff;letter-spacing:0.063px;-webkit-text-stroke:.3px #fff;">Play Store</span>
<span class="t" style="left:1598.5px;top:742.5px;height:18px;line-height:18px;font-size:12.50px;color:#fff;letter-spacing:0.272px;-webkit-text-stroke:.3px #fff;">Gmail</span>
<span class="t" style="left:1685.3px;top:742.5px;height:18px;line-height:18px;font-size:12.50px;color:#fff;letter-spacing:0.414px;-webkit-text-stroke:.3px #fff;">Photos</span>
<span class="t" style="left:1771.0px;top:742.5px;height:18px;line-height:18px;font-size:12.50px;color:#fff;letter-spacing:0.197px;-webkit-text-stroke:.3px #fff;">YouTube</span>
<div class="abs" style="left:1496.4px;top:839.0px;width:56.6px;height:56.6px;border-radius:50%;background:#1a73e8"></div>
<svg class="abs" style="left:1505.2px;top:847.8px;" width="39" height="39" viewBox="0 0 34 34"><path d="M9.200 5.600c1.300-.9 3-.5 3.800.8l2 3.400c.7 1.200.4 2.700-.6 3.600l-1.400 1.200c1.500 3 3.700 5.500 6.500 7.300l1.500-1.200c1.100-.9 2.600-.9 3.700-.1l3.100 2.400c1.200.9 1.400 2.700.4 3.800-1.700 1.900-4.400 2.600-6.800 1.700C13.600 25.600 8 19 6.300 11.900c-.5-2.400.6-4.900 2.900-6.300z" fill="#fff"/></svg>
<div class="abs" style="left:1587.0px;top:839.0px;width:56.6px;height:56.6px;border-radius:50%;background:#1a73e8"></div>
<svg class="abs" style="left:1600.3px;top:856.3px;" width="30" height="24" viewBox="0 0 30 24"><path d="M1.400 0H26c2.200 0 4 1.800 4 4v12c0 2.200-1.800 4-4 4H8c-2.200 0-4-1.800-4-4V6.400L.600 1.800C0 1 .500 0 1.400 0z" fill="#e8f0fe"/><path d="M8.600 6h16.800M8.600 10h16.800M8.600 14h12" stroke="#8ab4f8" stroke-width="2.200"/></svg>
<div class="abs" style="left:1677.5px;top:839.0px;width:56.600px;height:56.600px;border-radius:50%;background:conic-gradient(from -60deg,#ea4335 0deg 120deg,#fbbc04 120deg 240deg,#34a853 240deg 360deg)"></div>
<svg class="abs" style="left:1677.5px;top:839.0px;" width="56.6" height="56.6" viewBox="0 0 56.6 56.6"><path d="M28.300 28.300 3.800 14.200A28.300 28.300 0 0 1 52.800 14.200z" fill="#ea4335"/><path d="M28.300 28.300 52.800 14.200A28.300 28.300 0 0 1 28.300 56.600z" fill="#fbbc04" transform="rotate(0)"/><path d="M28.300 28.300 28.300 56.600A28.300 28.300 0 0 1 3.800 14.200z" fill="#34a853"/><path d="M28.300 15.600H52.100" stroke="#ea4335" stroke-width="0"/></svg>
<div class="abs" style="left:1692.4px;top:853.9px;width:26.8px;height:26.8px;border-radius:50%;background:#fff"></div>
<div class="abs" style="left:1695.2px;top:856.7px;width:21.2px;height:21.2px;border-radius:50%;background:#1a73e8"></div>
<div class="abs" style="left:1493.500px;top:928.500px;width:334px;height:48.500px;border-radius:25px;background:#fff"></div>
<svg class="abs" style="left:1509.0px;top:942.0px;" width="22" height="22" viewBox="0 0 22 22"><path d="M21.600 11.200c0-.8-.1-1.500-.2-2.200H11v4.200h5.900c-.3 1.400-1 2.500-2.200 3.300v2.700h3.500c2.100-1.900 3.400-4.700 3.400-8z" fill="#4285f4"/><path d="M11 22c3 0 5.500-1 7.300-2.700l-3.500-2.700c-1 .7-2.300 1.100-3.800 1.100-2.900 0-5.300-1.900-6.200-4.600H1.200v2.800C3 19.500 6.700 22 11 22z" fill="#34a853"/><path d="M4.800 13.100c-.2-.7-.3-1.400-.3-2.100s.1-1.400.3-2.100V6.100H1.200C.4 7.600 0 9.200 0 11s.4 3.400 1.200 4.900z" fill="#fbbc04"/><path d="M11 4.400c1.600 0 3.100.6 4.200 1.600l3.100-3.100C16.500 1.100 14 0 11 0 6.700 0 3 2.500 1.200 6.100l3.600 2.800C5.700 6.300 8.100 4.400 11 4.400z" fill="#ea4335"/></svg>
<svg class="abs" style="left:1746.0px;top:939.0px;" width="18" height="27" viewBox="0 0 18 27"><rect x="5.600" y="0" width="6.800" height="15" rx="3.400" fill="#4285f4"/><path d="M2 11.600a7 7 0 0 0 14 0" stroke="#ea4335" stroke-width="2" fill="none"/><path d="M2 11.600a7 7 0 0 0 4 6.300" stroke="#fbbc04" stroke-width="2" fill="none"/><path d="M9 18.600v6.400" stroke="#34a853" stroke-width="2"/></svg>
<svg class="abs" style="left:1788.0px;top:940.0px;" width="26" height="24" viewBox="0 0 26 24"><path d="M2 9V6.600C2 4.600 3.600 3 5.600 3H8l1.600-2h6.800L18 3" stroke="#4285f4" stroke-width="2.300" fill="none" stroke-linejoin="round"/><path d="M18 3h2.400c2 0 3.600 1.600 3.600 3.600V12" stroke="#ea4335" stroke-width="2.300" fill="none"/><path d="M2 9v10.400C2 21.400 3.600 23 5.600 23H12" stroke="#fbbc04" stroke-width="2.300" fill="none"/><path d="M12 23h7" stroke="#34a853" stroke-width="2.300"/><circle cx="21.600" cy="20.600" r="2.300" fill="#ea4335"/><circle cx="13" cy="12.800" r="4.300" fill="#4285f4"/></svg>
<div class="abs" style="left:1610px;top:1008px;width:101.500px;height:4px;border-radius:2px;background:#f2f2f2"></div>
</div><div class="abs" style="left:0;top:0;width:388px;height:891px;border-radius:10px;border:1px solid rgba(0,0,0,.5);border-top-color:rgba(255,255,255,.12)"></div></div>
<div class="abs" style="left:1855px;top:160px;width:61px;height:514px;background:#f0f0f0;border:1px solid #161616;box-shadow:0 3px 8px rgba(0,0,0,.35)"></div>
<svg class="abs" style="left:1869.0px;top:171.0px;" width="8" height="8" viewBox="0 0 8 8"><path d="M.8.800 7.200 7.200M7.200.800.800 7.200" stroke="#5c7785" stroke-width="1.100"/></svg>
<svg class="abs" style="left:1894.0px;top:173.8px;" width="8" height="2" viewBox="0 0 8 2"><path d="M.500 1H7.500" stroke="#5c7785" stroke-width="1.200"/></svg>
<svg class="abs" style="left:1872.5px;top:196.0px;" width="24" height="24" viewBox="0 0 24 24"><g stroke="#5c7785" stroke-width="2.200" fill="none" stroke-linecap="butt"><path d="M12 3v9.500"/><path d="M7 5.900a8 8 0 1 0 10 0"/></g></svg>
<svg class="abs" style="left:1872.5px;top:240.0px;" width="24" height="24" viewBox="0 0 24 24"><path d="M3.500 9v6h4l5 5V4l-5 5z" fill="#5c7785"/><path d="M15.500 8a5 5 0 0 1 0 8" stroke="#5c7785" stroke-width="1.900" fill="none"/><path d="M15 3.800a8.600 8.600 0 0 1 0 16.400" stroke="#5c7785" stroke-width="1.900" fill="none"/></svg>
<svg class="abs" style="left:1872.5px;top:284.0px;" width="24" height="24" viewBox="0 0 24 24"><path d="M5.500 9v6h4l5 5V4l-5 5z" fill="#5c7785"/><path d="M17 8a5 5 0 0 1 0 8" stroke="#5c7785" stroke-width="1.900" fill="none"/></svg>
<svg class="abs" style="left:1872.5px;top:327.3px;" width="24" height="24" viewBox="0 0 24 24"><path d="M9 3.500 7.200 5.600H4c-1.100 0-2 .9-2 2V19c0 1.100.9 2 2 2h16c1.100 0 2-.9 2-2V7.600c0-1.100-.9-2-2-2h-3.200L15 3.500z" fill="#5c7785"/><circle cx="12" cy="13.200" r="4.300" fill="none" stroke="#f0f0f0" stroke-width="2"/></svg>
<svg class="abs" style="left:1872.5px;top:372.0px;" width="24" height="24" viewBox="0 0 24 24"><circle cx="10" cy="10" r="6" stroke="#5c7785" stroke-width="1.900" fill="none"/><path d="M14.600 14.600 20.500 20.500" stroke="#5c7785" stroke-width="2.200"/><path d="M7.200 10h5.600M10 7.200v5.600" stroke="#5c7785" stroke-width="1.300"/></svg>
<svg class="abs" style="left:1872.5px;top:416.0px;" width="24" height="24" viewBox="0 0 24 24"><rect x="6.500" y="4" width="11" height="16" rx="1" transform="rotate(-45 12 12)" stroke="#5c7785" stroke-width="2.200" fill="none"/><path d="M14.500 1.500a9 9 0 0 1 7.600 7" stroke="#5c7785" stroke-width="1.300" fill="none"/></svg>
<svg class="abs" style="left:1872.5px;top:460.0px;" width="24" height="24" viewBox="0 0 24 24"><rect x="6.500" y="4" width="11" height="16" rx="1" transform="rotate(45 12 12)" stroke="#5c7785" stroke-width="2.200" fill="none"/><path d="M9.500 1.500a9 9 0 0 0-7.600 7" stroke="#5c7785" stroke-width="1.300" fill="none"/></svg>
<svg class="abs" style="left:1872.5px;top:504.0px;" width="24" height="24" viewBox="0 0 24 24"><path d="M17 5v14L5.500 12z" stroke="#5c7785" stroke-width="1.900" fill="none" stroke-linejoin="miter"/></svg>
<svg class="abs" style="left:1872.5px;top:548.0px;" width="24" height="24" viewBox="0 0 24 24"><circle cx="12" cy="12" r="6.400" stroke="#5c7785" stroke-width="1.900" fill="none"/></svg>
<svg class="abs" style="left:1872.5px;top:592.0px;" width="24" height="24" viewBox="0 0 24 24"><rect x="5.800" y="5.800" width="12.400" height="12.400" stroke="#5c7785" stroke-width="1.900" fill="none"/></svg>
<svg class="abs" style="left:1872.5px;top:636.0px;" width="24" height="24" viewBox="0 0 24 24"><circle cx="5.600" cy="12" r="1.700" fill="#5c7785"/><circle cx="12" cy="12" r="1.700" fill="#5c7785"/><circle cx="18.400" cy="12" r="1.700" fill="#5c7785"/></svg>
<div id="dock" class="abs" style="left:518px;top:1017px;width:883.500px;height:58px;border-radius:17px;background:rgba(112,44,62,.5);border:1px solid rgba(255,200,215,.22);box-shadow:0 0 0 .5px rgba(0,0,0,.35)"></div>
<div class="abs" style="left:526.7px;top:1025.5px;width:38px;height:38px;border-radius:8.5px;background:linear-gradient(90deg,#1e9af2 0%,#2aa6f6 52%,#eef1f6 52%,#dfe4ee 100%);overflow:hidden;"><div style="position:absolute;left:-.5px;top:-.5px;width:39px;height:39px"><svg width="39" height="39" viewBox="0 0 39 39"><path d="M20.500 0c-3.500 6-4.500 13-4 20h4.500c-.3 6 .2 12 1.500 19" stroke="#1d3c63" stroke-width="1.100" fill="none"/><path d="M20.500 0c-3.500 6-4.500 13-4 20h4.500c-.3 6 .2 12 1.500 19H39V0z" fill="#e9edf4"/><path d="M10.500 11v4M27.500 11v4" stroke="#17314f" stroke-width="1.700" stroke-linecap="round"/><path d="M7 24.500c7 6.500 18 6.500 25.500 0" stroke="#17314f" stroke-width="1.500" fill="none" stroke-linecap="round"/></svg></div></div>
<div class="abs" style="left:575.4px;top:1025.5px;width:38px;height:38px;border-radius:8.5px;background:linear-gradient(180deg,#d9c4c6,#c9b2b6);overflow:hidden;"><div style="position:absolute;left:-.5px;top:-.5px;width:39px;height:39px"><div class="abs" style="left:7.0px;top:7.2px;width:6.500px;height:6.500px;border-radius:1.600px;background:#34c759"></div><div class="abs" style="left:16.3px;top:7.2px;width:6.500px;height:6.500px;border-radius:1.600px;background:#ffcc00"></div><div class="abs" style="left:25.6px;top:7.2px;width:6.500px;height:6.500px;border-radius:1.600px;background:#ff9500"></div><div class="abs" style="left:7.0px;top:16.5px;width:6.500px;height:6.500px;border-radius:1.600px;background:#ff3b30"></div><div class="abs" style="left:16.3px;top:16.5px;width:6.500px;height:6.500px;border-radius:1.600px;background:#c7c7cc"></div><div class="abs" style="left:25.6px;top:16.5px;width:6.500px;height:6.500px;border-radius:1.600px;background:#ff2d78"></div><div class="abs" style="left:7.0px;top:25.8px;width:6.500px;height:6.500px;border-radius:1.600px;background:#af52de"></div><div class="abs" style="left:16.3px;top:25.8px;width:6.500px;height:6.500px;border-radius:1.600px;background:#0a84ff"></div><div class="abs" style="left:25.6px;top:25.8px;width:6.500px;height:6.500px;border-radius:1.600px;background:#30c8b0"></div></div></div>
<div class="abs" style="left:624.6px;top:1025.5px;width:38px;height:38px;border-radius:8.5px;background:linear-gradient(180deg,#3fe068,#12b83a);overflow:hidden;"><div style="position:absolute;left:-.5px;top:-.5px;width:39px;height:39px"><svg width="39" height="39" viewBox="0 0 39 39"><path d="M19.700 6.600a12.600 12.600 0 0 0-10.800 19.100L7 32.400l6.900-1.800A12.600 12.600 0 1 0 19.700 6.600z" fill="none" stroke="#fff" stroke-width="2.300"/><path d="M14.700 12.800c.5-.5 1.400-.4 1.700.2l1.200 2.500c.2.500.1 1-.3 1.400l-.8.800c1 2 2.500 3.500 4.500 4.500l.9-.9c.4-.4 1-.5 1.400-.2l2.400 1.300c.6.300.7 1.100.3 1.600-1 1.300-2.700 1.800-4.200 1.300-4.300-1.400-7.600-4.700-9-9-.4-1.200.3-2.700 1.900-3.500z" fill="#fff"/></svg></div></div>
<div class="abs" style="left:673.3px;top:1025.5px;width:38px;height:38px;border-radius:8.5px;background:#fff;overflow:hidden;"><div style="position:absolute;left:-.5px;top:-.5px;width:39px;height:39px"><svg width="39" height="39" viewBox="2.400 2.800 34.200 34.200"><path d="M27.800 8.600 25.600 6H13.400l-2.200 2.600-2.200-.4-2.200 2.400.8 2.400-.6 2.200 3.600 13.600c.5 1.700 1.500 2.800 3 3.700l4.400 2.700c.9.600 2.100.6 3 0l4.400-2.700c1.500-.9 2.500-2 3-3.700L32 15.200l-.6-2.200.8-2.400-2.200-2.400z" fill="#fb542b"/><path d="M19.500 12.200c1.400 0 2.800-.7 4-.5l3.300 1.600c.5.600-.4 1.800-.8 2.600l-2 2.400c-.4.600.6 1.500.4 2.200-.2.800-1.500 1.600-2.400 2.300-.5.400-1.800 1.500-2.500 1.500s-2-1.100-2.500-1.500c-.9-.7-2.200-1.500-2.400-2.300-.2-.7.800-1.600.4-2.200l-2-2.400c-.4-.8-1.300-2-.8-2.600l3.300-1.600c1.200-.2 2.600.5 4 .5z" fill="#fff"/><path d="M19.500 26.600l2.600 1.500-2.600 2.300-2.600-2.300z" fill="#fff"/></svg></div></div>
<div class="abs" style="left:722.5px;top:1025.5px;width:38px;height:38px;border-radius:8.5px;background:linear-gradient(180deg,#1fb0f8,#1565e0);overflow:hidden;"><div style="position:absolute;left:-.5px;top:-.5px;width:39px;height:39px"><svg width="39" height="39" viewBox="0 0 39 39"><g stroke="#fff" stroke-width="2.700" stroke-linecap="round" fill="none"><path d="M21 9.500 11.600 26M18.400 9.500l9.800 17.200M8 23.500h11.500M24.500 23.500H31M9.800 29l-1.200 2"/></g></svg></div></div>
<div class="abs" style="left:771.5px;top:1025.5px;width:38px;height:38px;border-radius:8.5px;background:linear-gradient(180deg,#2d8cff,#0b5cdf);overflow:hidden;"><div style="position:absolute;left:-.5px;top:-.5px;width:39px;height:39px"><span class="t" style="left:6.2px;top:11.3px;height:15px;line-height:15px;font-size:11.00px;color:#fff;letter-spacing:-0.480px;font-weight:700;">zoom</span></div></div>
<div class="abs" style="left:820.3px;top:1025.5px;width:38px;height:38px;border-radius:8.5px;background:linear-gradient(180deg,#34a5f4,#1a78dc);overflow:hidden;overflow:visible;"><div style="position:absolute;left:-.5px;top:-.5px;width:39px;height:39px"><svg width="39" height="39" viewBox="0 0 39 39"><rect x="3" y="3" width="33" height="33" rx="7" fill="none" stroke="#7cc6ff" stroke-width="1"/><g stroke="#8fd0ff" stroke-width="1.800" stroke-linecap="round" fill="none"><path d="M21 9.500 11.600 26M18.400 9.500l9.800 17.200M8 23.500h23"/></g></svg></div></div>
<svg class="abs" style="left:831.3px;top:1019.0px;" width="32" height="46" viewBox="0 0 32 46"><path d="M20 12 24 14 8 45 3.500 43z" fill="#3a3a3c"/><path d="M10 5.500c6-4 14-3.500 19 1l2.500 4-3 2.800-3-2.500c-2-1.500-5-2-7.500-1.500l-5 1z" fill="#55565a"/><path d="M10 5.500c6-4 14-3.500 19 1" stroke="#7d7e82" stroke-width="1" fill="none"/></svg>
<div class="abs" style="left:869.5px;top:1025.5px;width:38px;height:38px;border-radius:8.5px;background:#fff;overflow:hidden;"><div style="position:absolute;left:-.5px;top:-.5px;width:39px;height:39px"><svg width="39" height="39" viewBox="0 0 39 39"><g stroke="#1f7ae8" stroke-width="3.200" stroke-linecap="round" fill="none"><path d="M17.500 13 10.500 31M21.500 13l7 18"/><path d="M10.500 24.500c4 3.500 14 3.500 18 0" stroke="#4aa3f5" stroke-width="3.600"/></g><circle cx="19.500" cy="10" r="3.600" fill="#fff" stroke="#24292e" stroke-width="1.800"/><path d="M19.500 4v2.600" stroke="#24292e" stroke-width="1.600"/><circle cx="29" cy="19" r="2.600" fill="#3ddc84"/></svg></div></div>
<div class="abs" style="left:918.0px;top:1025.5px;width:38px;height:38px;border-radius:8.5px;background:#fff;overflow:hidden;"><div style="position:absolute;left:-.5px;top:-.5px;width:39px;height:39px"><svg width="39" height="39" viewBox="0 0 39 39"><path d="M27.500 6.500 33 9v21l-5.500 2.500L13 19.500z" fill="#1f9cf0"/><path d="M27.500 6.500 8 24.500l-2.600-1.800a1 1 0 0 1 0-1.500L27.500 12z" fill="#0f7ad0" opacity=".95"/><path d="M27.500 32.500 8 14.500l-2.600 1.800a1 1 0 0 0 0 1.500L27.500 27z" fill="#2489ca"/><path d="M27.500 12.500v14L18 19.500z" fill="#fff"/></svg></div></div>
<div class="abs" style="left:967.0px;top:1025.5px;width:38px;height:38px;border-radius:8.5px;background:#1e1e1e;overflow:hidden;"><div style="position:absolute;left:-.5px;top:-.5px;width:39px;height:39px"><svg width="39" height="39" viewBox="0 0 39 39"><path d="M14.500 7h5v8h-5a4 4 0 0 1 0-8z" fill="#f24e1e"/><path d="M19.500 7h5a4 4 0 0 1 0 8h-5z" fill="#ff7262"/><path d="M14.500 15h5v8h-5a4 4 0 0 1 0-8z" fill="#a259ff"/><circle cx="23.500" cy="19" r="4" fill="#1abcfe"/><path d="M14.500 23h5v4a4 4 0 1 1-5-4z" fill="#0acf83"/></svg></div></div>
<div class="abs" style="left:1016.5px;top:1025.5px;width:38px;height:38px;border-radius:8.5px;background:linear-gradient(180deg,#34a5f4,#1a78dc);overflow:hidden;overflow:visible;"><div style="position:absolute;left:-.5px;top:-.5px;width:39px;height:39px"><svg width="39" height="39" viewBox="0 0 39 39"><rect x="3" y="3" width="33" height="33" rx="7" fill="none" stroke="#7cc6ff" stroke-width="1"/><g stroke="#8fd0ff" stroke-width="1.800" stroke-linecap="round" fill="none"><path d="M21 9.500 11.600 26M18.400 9.500l9.800 17.200M8 23.500h23"/></g></svg></div></div>
<svg class="abs" style="left:1030.5px;top:1030.0px;" width="26" height="34" viewBox="0 0 26 34"><g transform="rotate(32 13 17)"><rect x="6" y="3" width="14" height="28" rx="2.600" fill="#1b1b1d"/><g stroke="#e8e8e8" stroke-width="1.500" stroke-linecap="round"><path d="M13.800 12 10 22M12.200 12l4 10M9 19.500h8"/></g></g></svg>
<div class="abs" style="left:1065.0px;top:1025.5px;width:38px;height:38px;border-radius:8.5px;background:#ff6c37;overflow:hidden;"><div style="position:absolute;left:-.5px;top:-.5px;width:39px;height:39px"><svg width="39" height="39" viewBox="0 0 39 39"><circle cx="28" cy="10.500" r="3" fill="#fff"/><path d="M25.500 12.500 13 25l-1.500 4.500L16 28 28.500 15.500z" fill="#fff"/><path d="M11.500 29.500 7 33" stroke="#fff" stroke-width="1.500" stroke-linecap="round"/><path d="M24 11 20.500 14.500" stroke="#fff" stroke-width="1.600"/></svg></div></div>
<div class="abs" style="left:1114.8px;top:1025.5px;width:38px;height:38px;border-radius:8.5px;background:linear-gradient(180deg,#6673f2,#4a5be6);overflow:hidden;"><div style="position:absolute;left:-.5px;top:-.5px;width:39px;height:39px"><svg width="39" height="39" viewBox="0 0 39 39"><path d="M28.600 11.200a20 20 0 0 0-5-1.500l-.7 1.300a18 18 0 0 0-6.800 0l-.7-1.300a20 20 0 0 0-5 1.500C7.200 16 6.400 20.800 6.800 25.500a20 20 0 0 0 6.100 3.100l1.300-2.100c-.7-.3-1.400-.600-2-1l.5-.4a14.400 14.400 0 0 0 13.600 0l.5.400c-.6.400-1.300.700-2 1l1.300 2.100a20 20 0 0 0 6.100-3.100c.5-5.500-.9-10.200-3.600-14.300z" fill="#fff"/><ellipse cx="15.300" cy="20.300" rx="2.300" ry="2.600" fill="#5865f2"/><ellipse cx="23.700" cy="20.300" rx="2.300" ry="2.600" fill="#5865f2"/></svg></div></div>
<div class="abs" style="left:1163.4px;top:1025.5px;width:38px;height:38px;border-radius:8.5px;background:#1a1a1c;overflow:hidden;border:2px solid #b9b9bd;"><div style="position:absolute;left:-.5px;top:-.5px;width:39px;height:39px"><span class="t" style="left:6.0px;top:5.5px;height:13px;line-height:13px;font-size:9.50px;color:#fff;font-weight:700;font-family:"Liberation Mono",monospace;">&gt;_</span></div></div>
<div class="abs" style="left:1212.5px;top:1025.5px;width:38px;height:38px;border-radius:8.5px;background:linear-gradient(180deg,#b4b4ba,#8a8a90);overflow:hidden;"><div style="position:absolute;left:-.5px;top:-.5px;width:39px;height:39px"><svg width="39" height="39" viewBox="0 0 39 39"><circle cx="19.500" cy="19.500" r="14.500" fill="#5a5a5f" stroke="#3c3c40" stroke-width="1.200"/><circle cx="19.500" cy="19.500" r="12" fill="none" stroke="#2e2e32" stroke-width="2.400" stroke-dasharray="2.200 1.600"/><circle cx="19.500" cy="19.500" r="9.300" fill="#8c8c92" stroke="#3c3c40" stroke-width="1.200"/><g stroke="#3c3c40" stroke-width="1.500"><path d="M19.500 19.500V10.400M19.500 19.500 27.400 24M19.500 19.500 11.600 24"/></g><circle cx="19.500" cy="19.500" r="2.600" fill="#3c3c40"/></svg></div></div>
<div class="abs" style="left:1238.500px;top:1022.500px;width:15px;height:15px;border-radius:50%;background:#ff3b30"></div>
<span class="t" style="left:1243.7px;top:1023.0px;height:14px;line-height:14px;font-size:10.00px;color:#fff;">1</span>
<div class="abs" style="left:1266.9px;top:1025px;width:1px;height:41px;background:rgba(255,190,215,.28)"></div>
<div class="abs" style="left:1339.0px;top:1025px;width:1px;height:41px;background:rgba(255,190,215,.28)"></div>
<div class="abs" style="left:1280.500px;top:1021.500px;width:46px;height:46px;border-radius:50%;background:#fff"></div>
<svg class="abs" style="left:1294.0px;top:1029.7px;" width="19" height="29.3" viewBox="0 0 19 29.3"><rect x="1.500" y="1.500" width="16" height="26.300" rx="2" fill="#fff" stroke="#0a7cff" stroke-width="3"/><path d="M3 5.800a8.800 8.800 0 0 1 0 17.600z" fill="#1fdd6e"/><path d="M9.800 9.800l2.600-1.800M9.800 19.500l2.600 1.800" stroke="#1fdd6e" stroke-width="1" stroke-linecap="round"/><circle cx="5.200" cy="11.200" r=".7" fill="#d8ffe8"/><circle cx="5.200" cy="18" r=".7" fill="#d8ffe8"/></svg>
<svg class="abs" style="left:1357.5px;top:1021.0px;" width="34" height="45" viewBox="0 0 34 45"><defs><linearGradient id="trg" x1="0" x2="1"><stop offset="0" stop-color="#5e5e62"/><stop offset=".3" stop-color="#8e8e92"/><stop offset=".6" stop-color="#77777b"/><stop offset="1" stop-color="#505054"/></linearGradient></defs><path d="M.800 6.500 5 41.500c.2 1.600 1.400 2.800 3 2.800h18c1.600 0 2.800-1.200 3-2.800L33.200 6.500z" fill="url(#trg)" opacity=".92"/><ellipse cx="17" cy="6.500" rx="16.200" ry="3.400" fill="#4c4c50"/><path d="M3 6.500 6 2.500l3.500 1.500L12 .800l3.500 2.200L19 .500l3 2.700 3.500-1.200 2.500 2.500 3 2c-5 3-23 3-28 0z" fill="#ececf0"/><path d="M8 3.500l3 3.500M20 2.500 18.500 6M25 3.500 23 7" stroke="#c8503a" stroke-width="1.300"/><path d="M13 3l2 3" stroke="#2d9be0" stroke-width="1.400"/><path d="M15 2.500l1.500 1" stroke="#3bbf4a" stroke-width="1.200"/></svg>
<div class="abs" style="left:544.2px;top:1069.500px;width:3px;height:3px;border-radius:50%;background:#d9a3c0"></div>
<div class="abs" style="left:690.8px;top:1069.500px;width:3px;height:3px;border-radius:50%;background:#d9a3c0"></div>
<div class="abs" style="left:935.5px;top:1069.500px;width:3px;height:3px;border-radius:50%;background:#d9a3c0"></div>
<div class="abs" style="left:1302.0px;top:1069.500px;width:3px;height:3px;border-radius:50%;background:#d9a3c0"></div>
<div class="abs" style="left:0;top:0;width:1920px;height:1080px;opacity:.33;pointer-events:none"><span class="t" dir="rtl" lang="ar" style="left:840.400px;top:939.600px;font:700 65.700px 'DejaVu Sans',sans-serif;line-height:normal;color:#e0e0e0;transform-origin:0 0;transform:scaleY(1.11)">مستقل</span><span class="t" style="left:855.400px;top:1015.100px;font:700 35.500px 'Liberation Sans',sans-serif;line-height:normal;color:#e0e0e0;letter-spacing:0">mostaql.com</span></div>
</div></body></html>
